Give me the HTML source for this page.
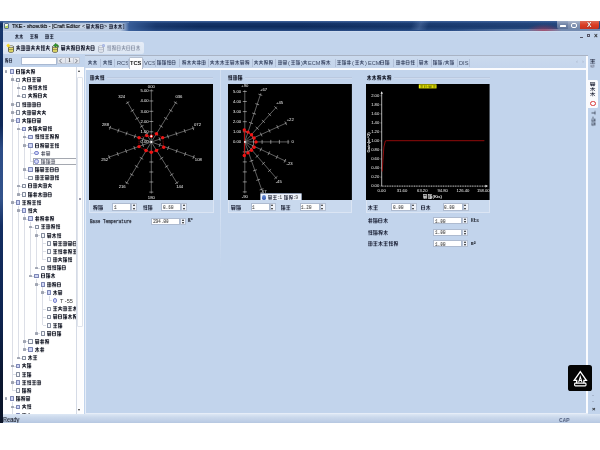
<!DOCTYPE html>
<html><head><meta charset="utf-8"><title>TKE</title>
<style>
html,body{margin:0;padding:0;background:#fff;}
body{width:600px;height:450px;position:relative;overflow:hidden;font-family:"Liberation Sans",sans-serif;}
.a{position:absolute;}
.cj{position:absolute;display:block;border-radius:1px;}
.t{position:absolute;white-space:nowrap;will-change:transform;}
.inp{position:absolute;background:#fff;border:0.6px solid #aebbd0;box-sizing:border-box;}
.spin{position:absolute;background:#edf1f8;border:0.5px solid #b4c0d4;box-sizing:border-box;}
svg{position:absolute;overflow:visible;will-change:transform;}
.cjs{stroke-linecap:square}
</style></head><body>

<svg width="0" height="0" style="position:absolute"><defs><symbol id="g0" viewBox="0 0 10 10" preserveAspectRatio="none"><path d="M1 1.5H9V9H1Z M1 5.2H9 M5 1.5V9" fill="none" stroke="currentColor"/></symbol><symbol id="g1" viewBox="0 0 10 10" preserveAspectRatio="none"><path d="M1 1.5H9 M2 5H8 M1 9H9 M5 1.5V9" fill="none" stroke="currentColor"/></symbol><symbol id="g2" viewBox="0 0 10 10" preserveAspectRatio="none"><path d="M1 3.2H9 M5 .8V9.4 M5 3.4L1 8.6 M5 3.4L9 8.6" fill="none" stroke="currentColor"/></symbol><symbol id="g3" viewBox="0 0 10 10" preserveAspectRatio="none"><path d="M2 1.2H8V9H2Z M2 5H8 M0.6 3V7" fill="none" stroke="currentColor"/></symbol><symbol id="g4" viewBox="0 0 10 10" preserveAspectRatio="none"><path d="M.8 3.2H9.2 M.8 6.8H9.2 M3.4 .8V9.4 M6.8 .8V9.4" fill="none" stroke="currentColor"/></symbol><symbol id="g5" viewBox="0 0 10 10" preserveAspectRatio="none"><path d="M1 3H9 M5 .8C5 5 3 8 .8 9.4 M5 4C6 7 7.5 8.5 9.4 9.2 M2 6H8" fill="none" stroke="currentColor"/></symbol><symbol id="g6" viewBox="0 0 10 10" preserveAspectRatio="none"><path d="M2.4 .8V9.4 M.6 3.4H4.2 M5.4 1.6H9.4 M5.4 5H9.4 M5.4 8.6H9.4 M7.4 1.6V8.6" fill="none" stroke="currentColor"/></symbol><symbol id="g7" viewBox="0 0 10 10" preserveAspectRatio="none"><path d="M1 1.2H9 M1 1.2V9.2 M3 3.6H9V9.2H3 M3 6.4H9 M6 3.6V9.2" fill="none" stroke="currentColor"/></symbol><symbol id="g8" viewBox="0 0 10 10" preserveAspectRatio="none"><path d="M.8 2.2H4 M2.4 .8V9.4 M.6 6.5L4 4.8 M5.4 1.2H9.2V5H5.4Z M5 7H9.6 M7.3 5V9.4" fill="none" stroke="currentColor"/></symbol><symbol id="g9" viewBox="0 0 10 10" preserveAspectRatio="none"><path d="M1 1H9V4H1Z M.6 5.6H9.4 M3 5.6V9.4 M7 5.6V9.4 M1.6 7.6H8.4" fill="none" stroke="currentColor"/></symbol></defs></svg>
<div class="a" style="left:0;top:21px;width:600px;height:401px;background:#c2d4ec"></div>
<div class="a" style="left:0;top:21px;width:600px;height:9.6px;background:linear-gradient(180deg,#3a5c96 0%,#143468 22%,#0e2b5c 55%,#17386c 80%,#2a4d86 100%)"></div>
<div class="a" style="left:300px;top:21px;width:300px;height:9.6px;background:linear-gradient(90deg,rgba(60,100,160,0),rgba(60,100,160,.28) 60%,rgba(70,110,170,.4))"></div>
<div class="a" style="left:2.8px;top:30.6px;width:597px;height:1.2px;background:linear-gradient(180deg,#d8e3f3,rgba(216,227,243,0))"></div>
<div class="a" style="left:450px;top:28.9px;width:150px;height:1.8px;background:linear-gradient(90deg,rgba(122,144,180,0),rgba(122,144,180,.9) 70%)"></div>
<div class="a" style="left:120px;top:21px;width:80px;height:9.6px;background:linear-gradient(90deg,rgba(70,108,168,.95) 0,rgba(60,98,158,.75) 18%,rgba(45,80,140,.3) 45%,rgba(45,80,140,0) 100%)"></div>
<div class="a" style="left:2.8px;top:22.4px;width:126px;height:8.2px;background:linear-gradient(90deg,rgba(186,202,224,1) 0,rgba(184,200,222,1) 93%,rgba(150,172,206,.7) 97%,rgba(120,150,190,0) 100%)"></div>
<div class="a" style="left:2.8px;top:21px;width:126px;height:1.6px;background:linear-gradient(180deg,#4a70a8,#7c9ac4)"></div>
<div class="a" style="left:8px;top:24px;width:112px;height:5px;background:radial-gradient(ellipse at 50% 50%,rgba(225,232,242,.75),rgba(225,232,242,0) 75%)"></div>
<div class="a" style="left:0;top:21px;width:600px;height:2px;background:linear-gradient(180deg,rgba(60,95,150,.9),rgba(60,95,150,0))"></div>
<div class="a" style="left:400px;top:21px;width:40px;height:9px;background:linear-gradient(110deg,rgba(255,255,255,0) 30%,rgba(120,150,200,.35) 50%,rgba(255,255,255,0) 70%)"></div>
<div class="a" style="left:526px;top:23.5px;width:36px;height:7px;background:radial-gradient(ellipse at 50% 100%,rgba(200,50,75,.6),rgba(200,60,80,0) 70%)"></div>
<div class="a" style="left:4.3px;top:23.2px;width:4.4px;height:5.4px;background:linear-gradient(160deg,#f8fae0 40%,#9ccc60 60%,#e8e060);border:0.5px solid #5a7290;box-sizing:border-box;border-radius:1px"></div>
<span class="t" style="left:11.8px;top:22.7px;font:normal 6px/7.2px 'Liberation Sans',sans-serif;color:#05080f;transform:scaleX(.875);transform-origin:0 50%;-webkit-text-stroke:0.2px #05080f">TKE - show.tkb - [Craft Editor</span>
<span class="t" style="left:82.2px;top:23.1px;font:normal 5.4px/6.5px 'Liberation Sans',sans-serif;color:#05080f;">&lt;</span>
<svg class="cjs" style="left:85.6px;top:23.6px;color:rgba(10,15,35,0.91);stroke-width:1.5" width="18.4" height="5.2"><use href="#g9" x="0.00" y="0" width="4.10" height="5.20"/><use href="#g5" x="4.60" y="0" width="4.10" height="5.20"/><use href="#g8" x="9.20" y="0" width="4.10" height="5.20"/><use href="#g3" x="13.80" y="0" width="4.10" height="5.20"/></svg>
<span class="t" style="left:104.2px;top:23.1px;font:normal 5.4px/6.5px 'Liberation Sans',sans-serif;color:#05080f;">&gt;</span>
<svg class="cjs" style="left:109.0px;top:23.6px;color:rgba(10,15,35,0.91);stroke-width:1.5" width="13.5" height="5.2"><use href="#g0" x="0.00" y="0" width="4.00" height="5.20"/><use href="#g2" x="4.50" y="0" width="4.00" height="5.20"/><use href="#g2" x="9.00" y="0" width="4.00" height="5.20"/></svg>
<span class="t" style="left:122.6px;top:23.1px;font:normal 5.4px/6.5px 'Liberation Sans',sans-serif;color:#05080f;">]</span>
<div class="a" style="left:557.4px;top:21.2px;width:11px;height:7.7px;background:linear-gradient(180deg,#9aa9c4,#7083a6 45%,#5a7098);border-radius:0 0 0 2px;box-sizing:border-box"></div>
<div class="a" style="left:568.4px;top:21.2px;width:11.4px;height:7.7px;background:linear-gradient(180deg,#aab6cc,#8796b4 45%,#7084a8);box-sizing:border-box"></div>
<div class="a" style="left:579.8px;top:21.2px;width:19.2px;height:7.7px;background:linear-gradient(180deg,#dc6c58,#dc3c22 50%,#c23220);border-radius:0 0 2px 0;box-sizing:border-box"></div>
<div class="a" style="left:560px;top:25.4px;width:5.6px;height:1.8px;background:#fff;border-radius:.5px"></div>
<div class="a" style="left:571.4px;top:22.5px;width:5.4px;height:5px;border:1.3px solid #fff;box-sizing:border-box;border-radius:2px"></div>
<span class="t" style="left:586.8px;top:21.1px;font:bold 6.6px/7.9px 'Liberation Sans',sans-serif;color:#fff;text-shadow:0 0 1px #501008">X</span>
<div class="a" style="left:0;top:29px;width:2.8px;height:386px;background:linear-gradient(180deg,#17386e 0,#0d2656 20%,#0e2858 25%,#2c4c86 31%,#33538b 44%,#132e62 51%,#0e2450 75%,#0a1730 90%,#0a1428)"></div>
<svg class="cjs" style="left:15.2px;top:34.1px;color:rgba(15,20,40,0.91);stroke-width:1.5" width="8.6" height="5.2"><use href="#g2" x="0.00" y="0" width="3.80" height="5.20"/><use href="#g2" x="4.30" y="0" width="3.80" height="5.20"/></svg>
<svg class="cjs" style="left:30.0px;top:34.1px;color:rgba(15,20,40,0.91);stroke-width:1.5" width="8.6" height="5.2"><use href="#g1" x="0.00" y="0" width="3.80" height="5.20"/><use href="#g8" x="4.30" y="0" width="3.80" height="5.20"/></svg>
<svg class="cjs" style="left:45.2px;top:34.1px;color:rgba(15,20,40,0.91);stroke-width:1.5" width="9.2" height="5.2"><use href="#g0" x="0.00" y="0" width="4.10" height="5.20"/><use href="#g1" x="4.60" y="0" width="4.10" height="5.20"/></svg>
<div class="a" style="left:579.5px;top:37px;width:3px;height:1.2px;background:#556"></div>
<div class="a" style="left:586.5px;top:33.5px;width:3.2px;height:3.5px;border:0.8px solid #556;box-sizing:border-box"></div>
<span class="t" style="left:593.8px;top:32.2px;font:bold 6.4px/7.7px 'Liberation Sans',sans-serif;color:#222;">×</span>
<div class="a" style="left:3.4px;top:42.2px;width:140.6px;height:12.2px;background:linear-gradient(180deg,#e6edf7,#dce6f3);border-radius:1px 2px 2px 1px"></div>
<svg style="left:7.8px;top:44.6px" width="6" height="8" viewBox="0 0 6 8"><path d="M0.5 1.6 V6.6 C0.5 7.6 5.5 7.6 5.5 6.6 V1.6 Z" fill="#ece46a" stroke="#3c3c30" stroke-width="0.7"/><ellipse cx="3" cy="1.7" rx="2.5" ry="1" fill="#fbfbf0" stroke="#3c3c30" stroke-width="0.6"/><path d="M0.6 4.1 C1.2 5 4.8 5 5.4 4.1" fill="none" stroke="#3c3c30" stroke-width="0.55"/></svg>
<div class="a" style="left:6.8px;top:43.6px;width:2.6px;height:2.6px;background:#f8d81c;border-radius:40%;transform:rotate(45deg)"></div>
<svg class="cjs" style="left:15.6px;top:45.2px;color:rgba(12,16,34,0.94);stroke-width:1.55" width="34.4" height="6.0"><use href="#g5" x="0.00" y="0" width="4.42" height="6.00"/><use href="#g0" x="4.92" y="0" width="4.42" height="6.00"/><use href="#g0" x="9.84" y="0" width="4.42" height="6.00"/><use href="#g5" x="14.76" y="0" width="4.42" height="6.00"/><use href="#g5" x="19.68" y="0" width="4.42" height="6.00"/><use href="#g6" x="24.60" y="0" width="4.42" height="6.00"/><use href="#g5" x="29.52" y="0" width="4.42" height="6.00"/></svg>
<svg style="left:52.4px;top:45px" width="6" height="8" viewBox="0 0 6 8"><path d="M0.5 1.6 V6.6 C0.5 7.6 5.5 7.6 5.5 6.6 V1.6 Z" fill="#ece46a" stroke="#3c3c30" stroke-width="0.7"/><ellipse cx="3" cy="1.7" rx="2.5" ry="1" fill="#fbfbf0" stroke="#3c3c30" stroke-width="0.6"/><path d="M0.6 4.1 C1.2 5 4.8 5 5.4 4.1" fill="none" stroke="#3c3c30" stroke-width="0.55"/></svg>
<svg style="left:53.4px;top:43px" width="6" height="4.6" viewBox="0 0 6 4.6"><path d="M0.4 2.4 L3 0.2 L3 1.3 C5 1.3 5.8 2.6 5.6 4.4 C5 3.2 4.2 3 3 3 L3 4.4 Z" fill="#2f9a2c" stroke="#1c5a1a" stroke-width="0.4"/></svg>
<svg class="cjs" style="left:61.2px;top:45.2px;color:rgba(12,16,34,0.94);stroke-width:1.55" width="34.4" height="6.0"><use href="#g9" x="0.00" y="0" width="4.42" height="6.00"/><use href="#g5" x="4.92" y="0" width="4.42" height="6.00"/><use href="#g8" x="9.84" y="0" width="4.42" height="6.00"/><use href="#g3" x="14.76" y="0" width="4.42" height="6.00"/><use href="#g8" x="19.68" y="0" width="4.42" height="6.00"/><use href="#g5" x="24.60" y="0" width="4.42" height="6.00"/><use href="#g3" x="29.52" y="0" width="4.42" height="6.00"/></svg>
<svg style="left:98.4px;top:45px" width="6" height="8" viewBox="0 0 6 8"><path d="M0.5 1.6 V6.6 C0.5 7.6 5.5 7.6 5.5 6.6 V1.6 Z" fill="#e4e8f0" stroke="#9aa2b2" stroke-width="0.7"/><ellipse cx="3" cy="1.7" rx="2.5" ry="1" fill="#f8f9fc" stroke="#9aa2b2" stroke-width="0.6"/><path d="M0.6 4.1 C1.2 5 4.8 5 5.4 4.1" fill="none" stroke="#9aa2b2" stroke-width="0.55"/></svg>
<div class="a" style="left:101.5px;top:43.6px;width:3.6px;height:3.6px;background:radial-gradient(circle,#b8c4ec,#8a9cd4);border-radius:50%"></div>
<svg class="cjs" style="left:107.0px;top:45.2px;color:rgba(120,130,150,0.78);stroke-width:1.3" width="33.7" height="6.0"><use href="#g6" x="0.00" y="0" width="4.32" height="6.00"/><use href="#g8" x="4.82" y="0" width="4.32" height="6.00"/><use href="#g3" x="9.64" y="0" width="4.32" height="6.00"/><use href="#g5" x="14.46" y="0" width="4.32" height="6.00"/><use href="#g3" x="19.28" y="0" width="4.32" height="6.00"/><use href="#g3" x="24.10" y="0" width="4.32" height="6.00"/><use href="#g2" x="28.92" y="0" width="4.32" height="6.00"/></svg>
<svg class="cjs" style="left:4.5px;top:58.2px;color:rgba(15,20,40,0.85);stroke-width:1.5" width="7.8" height="5.2"><use href="#g8" x="0.00" y="0" width="3.40" height="5.20"/><use href="#g3" x="3.90" y="0" width="3.40" height="5.20"/></svg>
<div class="inp" style="left:21px;top:57px;width:35.5px;height:7.6px;border-color:#a9b9d2"></div>
<div class="a" style="left:57.4px;top:56.6px;width:22.8px;height:7.8px;background:linear-gradient(180deg,#eceef3,#dde1e9);border:0.5px solid #c0c8d6;box-sizing:border-box;border-radius:1px"></div>
<div class="a" style="left:64.8px;top:57px;width:0.6px;height:7px;background:#c4cad6"></div>
<div class="a" style="left:72.6px;top:57px;width:0.6px;height:7px;background:#c4cad6"></div>
<svg style="left:57.4px;top:56.6px" width="22.8" height="7.8" viewBox="0 0 22.8 7.8"><path d="M4.6 1.8 L2.6 3.9 L4.6 6 M18.4 1.8 L20.4 3.9 L18.4 6" fill="none" stroke="#6a6e78" stroke-width="0.9"/></svg>
<span class="t" style="left:67.8px;top:57.2px;font:bold 5.8px/7.0px 'Liberation Serif',serif;color:#555;">1</span>
<div class="a" style="left:3px;top:66.5px;width:80.5px;height:347.5px;background:#fff;overflow:hidden" id="tree">
<div class="a" style="left:8.9px;top:8.1px;width:0.6px;height:5.2px;background:#dcdfe7"></div>
<div class="a" style="left:9.2px;top:13.0px;width:3.4px;height:0.6px;background:#dcdfe7"></div>
<div class="a" style="left:15.0px;top:16.3px;width:0.6px;height:5.2px;background:#dcdfe7"></div>
<div class="a" style="left:15.3px;top:21.2px;width:3.4px;height:0.6px;background:#dcdfe7"></div>
<div class="a" style="left:15.0px;top:16.3px;width:0.6px;height:13.4px;background:#dcdfe7"></div>
<div class="a" style="left:15.3px;top:29.3px;width:3.4px;height:0.6px;background:#dcdfe7"></div>
<div class="a" style="left:8.9px;top:8.1px;width:0.6px;height:29.7px;background:#dcdfe7"></div>
<div class="a" style="left:9.2px;top:37.5px;width:3.4px;height:0.6px;background:#dcdfe7"></div>
<div class="a" style="left:8.9px;top:8.1px;width:0.6px;height:37.9px;background:#dcdfe7"></div>
<div class="a" style="left:9.2px;top:45.7px;width:3.4px;height:0.6px;background:#dcdfe7"></div>
<div class="a" style="left:8.9px;top:8.1px;width:0.6px;height:46.1px;background:#dcdfe7"></div>
<div class="a" style="left:9.2px;top:53.9px;width:3.4px;height:0.6px;background:#dcdfe7"></div>
<div class="a" style="left:15.0px;top:57.2px;width:0.6px;height:5.2px;background:#dcdfe7"></div>
<div class="a" style="left:15.3px;top:62.1px;width:3.4px;height:0.6px;background:#dcdfe7"></div>
<div class="a" style="left:21.1px;top:65.4px;width:0.6px;height:5.2px;background:#dcdfe7"></div>
<div class="a" style="left:21.4px;top:70.2px;width:3.4px;height:0.6px;background:#dcdfe7"></div>
<div class="a" style="left:21.1px;top:65.4px;width:0.6px;height:13.4px;background:#dcdfe7"></div>
<div class="a" style="left:21.4px;top:78.4px;width:3.4px;height:0.6px;background:#dcdfe7"></div>
<div class="a" style="left:27.2px;top:81.7px;width:0.6px;height:5.2px;background:#dcdfe7"></div>
<div class="a" style="left:27.5px;top:86.6px;width:3.4px;height:0.6px;background:#dcdfe7"></div>
<div class="a" style="left:27.2px;top:81.7px;width:0.6px;height:13.4px;background:#dcdfe7"></div>
<div class="a" style="left:27.5px;top:94.8px;width:3.4px;height:0.6px;background:#dcdfe7"></div>
<div class="a" style="left:21.1px;top:65.4px;width:0.6px;height:37.9px;background:#dcdfe7"></div>
<div class="a" style="left:21.4px;top:103.0px;width:3.4px;height:0.6px;background:#dcdfe7"></div>
<div class="a" style="left:21.1px;top:65.4px;width:0.6px;height:46.1px;background:#dcdfe7"></div>
<div class="a" style="left:21.4px;top:111.1px;width:3.4px;height:0.6px;background:#dcdfe7"></div>
<div class="a" style="left:15.0px;top:57.2px;width:0.6px;height:62.4px;background:#dcdfe7"></div>
<div class="a" style="left:15.3px;top:119.3px;width:3.4px;height:0.6px;background:#dcdfe7"></div>
<div class="a" style="left:15.0px;top:57.2px;width:0.6px;height:70.6px;background:#dcdfe7"></div>
<div class="a" style="left:15.3px;top:127.5px;width:3.4px;height:0.6px;background:#dcdfe7"></div>
<div class="a" style="left:8.9px;top:8.1px;width:0.6px;height:127.9px;background:#dcdfe7"></div>
<div class="a" style="left:9.2px;top:135.7px;width:3.4px;height:0.6px;background:#dcdfe7"></div>
<div class="a" style="left:15.0px;top:139.0px;width:0.6px;height:5.2px;background:#dcdfe7"></div>
<div class="a" style="left:15.3px;top:143.9px;width:3.4px;height:0.6px;background:#dcdfe7"></div>
<div class="a" style="left:21.1px;top:147.2px;width:0.6px;height:5.2px;background:#dcdfe7"></div>
<div class="a" style="left:21.4px;top:152.0px;width:3.4px;height:0.6px;background:#dcdfe7"></div>
<div class="a" style="left:27.2px;top:155.3px;width:0.6px;height:5.2px;background:#dcdfe7"></div>
<div class="a" style="left:27.5px;top:160.2px;width:3.4px;height:0.6px;background:#dcdfe7"></div>
<div class="a" style="left:33.3px;top:163.5px;width:0.6px;height:5.2px;background:#dcdfe7"></div>
<div class="a" style="left:33.6px;top:168.4px;width:3.4px;height:0.6px;background:#dcdfe7"></div>
<div class="a" style="left:39.4px;top:171.7px;width:0.6px;height:5.2px;background:#dcdfe7"></div>
<div class="a" style="left:39.7px;top:176.6px;width:3.4px;height:0.6px;background:#dcdfe7"></div>
<div class="a" style="left:39.4px;top:171.7px;width:0.6px;height:13.4px;background:#dcdfe7"></div>
<div class="a" style="left:39.7px;top:184.8px;width:3.4px;height:0.6px;background:#dcdfe7"></div>
<div class="a" style="left:39.4px;top:171.7px;width:0.6px;height:21.5px;background:#dcdfe7"></div>
<div class="a" style="left:39.7px;top:192.9px;width:3.4px;height:0.6px;background:#dcdfe7"></div>
<div class="a" style="left:33.3px;top:163.5px;width:0.6px;height:37.9px;background:#dcdfe7"></div>
<div class="a" style="left:33.6px;top:201.1px;width:3.4px;height:0.6px;background:#dcdfe7"></div>
<div class="a" style="left:27.2px;top:155.3px;width:0.6px;height:54.3px;background:#dcdfe7"></div>
<div class="a" style="left:27.5px;top:209.3px;width:3.4px;height:0.6px;background:#dcdfe7"></div>
<div class="a" style="left:33.3px;top:212.6px;width:0.6px;height:5.2px;background:#dcdfe7"></div>
<div class="a" style="left:33.6px;top:217.5px;width:3.4px;height:0.6px;background:#dcdfe7"></div>
<div class="a" style="left:39.4px;top:220.8px;width:0.6px;height:5.2px;background:#dcdfe7"></div>
<div class="a" style="left:39.7px;top:225.7px;width:3.4px;height:0.6px;background:#dcdfe7"></div>
<div class="a" style="left:45.5px;top:229.0px;width:0.6px;height:5.2px;background:#dcdfe7"></div>
<div class="a" style="left:45.8px;top:233.8px;width:3.4px;height:0.6px;background:#dcdfe7"></div>
<div class="a" style="left:39.4px;top:220.8px;width:0.6px;height:21.5px;background:#dcdfe7"></div>
<div class="a" style="left:39.7px;top:242.0px;width:3.4px;height:0.6px;background:#dcdfe7"></div>
<div class="a" style="left:39.4px;top:220.8px;width:0.6px;height:29.7px;background:#dcdfe7"></div>
<div class="a" style="left:39.7px;top:250.2px;width:3.4px;height:0.6px;background:#dcdfe7"></div>
<div class="a" style="left:39.4px;top:220.8px;width:0.6px;height:37.9px;background:#dcdfe7"></div>
<div class="a" style="left:39.7px;top:258.4px;width:3.4px;height:0.6px;background:#dcdfe7"></div>
<div class="a" style="left:33.3px;top:212.6px;width:0.6px;height:54.3px;background:#dcdfe7"></div>
<div class="a" style="left:33.6px;top:266.6px;width:3.4px;height:0.6px;background:#dcdfe7"></div>
<div class="a" style="left:21.1px;top:147.2px;width:0.6px;height:127.9px;background:#dcdfe7"></div>
<div class="a" style="left:21.4px;top:274.7px;width:3.4px;height:0.6px;background:#dcdfe7"></div>
<div class="a" style="left:21.1px;top:147.2px;width:0.6px;height:136.1px;background:#dcdfe7"></div>
<div class="a" style="left:21.4px;top:282.9px;width:3.4px;height:0.6px;background:#dcdfe7"></div>
<div class="a" style="left:15.0px;top:139.0px;width:0.6px;height:152.4px;background:#dcdfe7"></div>
<div class="a" style="left:15.3px;top:291.1px;width:3.4px;height:0.6px;background:#dcdfe7"></div>
<div class="a" style="left:8.9px;top:8.1px;width:0.6px;height:291.5px;background:#dcdfe7"></div>
<div class="a" style="left:9.2px;top:299.3px;width:3.4px;height:0.6px;background:#dcdfe7"></div>
<div class="a" style="left:8.9px;top:8.1px;width:0.6px;height:299.7px;background:#dcdfe7"></div>
<div class="a" style="left:9.2px;top:307.5px;width:3.4px;height:0.6px;background:#dcdfe7"></div>
<div class="a" style="left:8.9px;top:8.1px;width:0.6px;height:307.8px;background:#dcdfe7"></div>
<div class="a" style="left:9.2px;top:315.6px;width:3.4px;height:0.6px;background:#dcdfe7"></div>
<div class="a" style="left:8.9px;top:8.1px;width:0.6px;height:316.0px;background:#dcdfe7"></div>
<div class="a" style="left:9.2px;top:323.8px;width:3.4px;height:0.6px;background:#dcdfe7"></div>
<div class="a" style="left:8.9px;top:335.3px;width:0.6px;height:5.2px;background:#dcdfe7"></div>
<div class="a" style="left:9.2px;top:340.2px;width:3.4px;height:0.6px;background:#dcdfe7"></div>
<div class="a" style="left:8.9px;top:335.3px;width:0.6px;height:13.4px;background:#dcdfe7"></div>
<div class="a" style="left:9.2px;top:348.4px;width:3.4px;height:0.6px;background:#dcdfe7"></div>
<div class="a" style="left:1.7px;top:3.7px;width:2.8px;height:2.8px;background:#a0a5b2;border-radius:.6px"></div>
<div class="a" style="left:6.8px;top:2.7px;width:4.4px;height:4.8px;border:0.8px solid #7c86b4;box-sizing:border-box;background:#d0d6f6;border-radius:.6px"></div>
<svg class="cjs" style="left:12.6px;top:2.4px;color:rgba(10,14,28,0.91);stroke-width:1.7" width="19.6" height="5.4"><use href="#g3" x="0.00" y="0" width="4.45" height="5.40"/><use href="#g7" x="4.90" y="0" width="4.45" height="5.40"/><use href="#g5" x="9.80" y="0" width="4.45" height="5.40"/><use href="#g8" x="14.70" y="0" width="4.45" height="5.40"/></svg>
<div class="a" style="left:7.8px;top:11.9px;width:2.8px;height:2.8px;background:#a0a5b2;border-radius:.6px"></div>
<div class="a" style="left:13.0px;top:11.0px;width:4.3px;height:4.7px;border:0.8px solid #858d9e;box-sizing:border-box;background:#f6f8fb;border-radius:.6px"></div>
<svg class="cjs" style="left:18.9px;top:10.6px;color:rgba(10,14,28,0.91);stroke-width:1.7" width="19.6" height="5.4"><use href="#g5" x="0.00" y="0" width="4.45" height="5.40"/><use href="#g3" x="4.90" y="0" width="4.45" height="5.40"/><use href="#g1" x="9.80" y="0" width="4.45" height="5.40"/><use href="#g9" x="14.70" y="0" width="4.45" height="5.40"/></svg>
<div class="a" style="left:13.9px;top:20.1px;width:2.8px;height:2.8px;background:#a0a5b2;border-radius:.6px"></div>
<div class="a" style="left:19.2px;top:19.2px;width:4.3px;height:4.7px;border:0.8px solid #858d9e;box-sizing:border-box;background:#f6f8fb;border-radius:.6px"></div>
<svg class="cjs" style="left:25.2px;top:18.8px;color:rgba(10,14,28,0.91);stroke-width:1.7" width="19.6" height="5.4"><use href="#g8" x="0.00" y="0" width="4.45" height="5.40"/><use href="#g6" x="4.90" y="0" width="4.45" height="5.40"/><use href="#g2" x="9.80" y="0" width="4.45" height="5.40"/><use href="#g6" x="14.70" y="0" width="4.45" height="5.40"/></svg>
<div class="a" style="left:13.9px;top:28.2px;width:2.8px;height:2.8px;background:#a0a5b2;border-radius:.6px"></div>
<div class="a" style="left:19.2px;top:27.3px;width:4.3px;height:4.7px;border:0.8px solid #858d9e;box-sizing:border-box;background:#f6f8fb;border-radius:.6px"></div>
<svg class="cjs" style="left:25.2px;top:26.9px;color:rgba(10,14,28,0.91);stroke-width:1.7" width="19.6" height="5.4"><use href="#g5" x="0.00" y="0" width="4.45" height="5.40"/><use href="#g8" x="4.90" y="0" width="4.45" height="5.40"/><use href="#g3" x="9.80" y="0" width="4.45" height="5.40"/><use href="#g5" x="14.70" y="0" width="4.45" height="5.40"/></svg>
<div class="a" style="left:7.8px;top:36.4px;width:2.8px;height:2.8px;background:#a0a5b2;border-radius:.6px"></div>
<div class="a" style="left:13.0px;top:35.5px;width:4.3px;height:4.7px;border:0.8px solid #858d9e;box-sizing:border-box;background:#f6f8fb;border-radius:.6px"></div>
<svg class="cjs" style="left:18.9px;top:35.1px;color:rgba(10,14,28,0.91);stroke-width:1.7" width="19.6" height="5.4"><use href="#g6" x="0.00" y="0" width="4.45" height="5.40"/><use href="#g0" x="4.90" y="0" width="4.45" height="5.40"/><use href="#g0" x="9.80" y="0" width="4.45" height="5.40"/><use href="#g3" x="14.70" y="0" width="4.45" height="5.40"/></svg>
<div class="a" style="left:7.8px;top:44.6px;width:2.8px;height:2.8px;background:#a0a5b2;border-radius:.6px"></div>
<div class="a" style="left:13.0px;top:43.7px;width:4.3px;height:4.7px;border:0.8px solid #858d9e;box-sizing:border-box;background:#f6f8fb;border-radius:.6px"></div>
<svg class="cjs" style="left:18.9px;top:43.3px;color:rgba(10,14,28,0.91);stroke-width:1.7" width="24.5" height="5.4"><use href="#g5" x="0.00" y="0" width="4.45" height="5.40"/><use href="#g0" x="4.90" y="0" width="4.45" height="5.40"/><use href="#g9" x="9.80" y="0" width="4.45" height="5.40"/><use href="#g5" x="14.70" y="0" width="4.45" height="5.40"/><use href="#g5" x="19.60" y="0" width="4.45" height="5.40"/></svg>
<div class="a" style="left:7.8px;top:52.8px;width:2.8px;height:2.8px;background:#a0a5b2;border-radius:.6px"></div>
<div class="a" style="left:12.9px;top:51.8px;width:4.4px;height:4.8px;border:0.8px solid #7c86b4;box-sizing:border-box;background:#d0d6f6;border-radius:.6px"></div>
<svg class="cjs" style="left:18.9px;top:51.5px;color:rgba(10,14,28,0.91);stroke-width:1.7" width="19.6" height="5.4"><use href="#g5" x="0.00" y="0" width="4.45" height="5.40"/><use href="#g7" x="4.90" y="0" width="4.45" height="5.40"/><use href="#g3" x="9.80" y="0" width="4.45" height="5.40"/><use href="#g9" x="14.70" y="0" width="4.45" height="5.40"/></svg>
<div class="a" style="left:13.9px;top:61.0px;width:2.8px;height:2.8px;background:#a0a5b2;border-radius:.6px"></div>
<div class="a" style="left:19.1px;top:60.0px;width:4.4px;height:4.8px;border:0.8px solid #7c86b4;box-sizing:border-box;background:#d0d6f6;border-radius:.6px"></div>
<svg class="cjs" style="left:25.2px;top:59.7px;color:rgba(10,14,28,0.91);stroke-width:1.7" width="24.5" height="5.4"><use href="#g5" x="0.00" y="0" width="4.45" height="5.40"/><use href="#g7" x="4.90" y="0" width="4.45" height="5.40"/><use href="#g5" x="9.80" y="0" width="4.45" height="5.40"/><use href="#g9" x="14.70" y="0" width="4.45" height="5.40"/><use href="#g6" x="19.60" y="0" width="4.45" height="5.40"/></svg>
<div class="a" style="left:20.0px;top:69.1px;width:2.8px;height:2.8px;background:#a0a5b2;border-radius:.6px"></div>
<div class="a" style="left:25.3px;top:68.1px;width:4.4px;height:4.8px;border:0.8px solid #7c86b4;box-sizing:border-box;background:#d0d6f6;border-radius:.6px"></div>
<svg class="cjs" style="left:31.5px;top:67.8px;color:rgba(10,14,28,0.91);stroke-width:1.7" width="24.5" height="5.4"><use href="#g6" x="0.00" y="0" width="4.45" height="5.40"/><use href="#g6" x="4.90" y="0" width="4.45" height="5.40"/><use href="#g1" x="9.80" y="0" width="4.45" height="5.40"/><use href="#g8" x="14.70" y="0" width="4.45" height="5.40"/><use href="#g8" x="19.60" y="0" width="4.45" height="5.40"/></svg>
<div class="a" style="left:20.0px;top:77.3px;width:2.8px;height:2.8px;background:#a0a5b2;border-radius:.6px"></div>
<div class="a" style="left:25.3px;top:76.3px;width:4.4px;height:4.8px;border:0.8px solid #7c86b4;box-sizing:border-box;background:#d0d6f6;border-radius:.6px"></div>
<svg class="cjs" style="left:31.5px;top:76.0px;color:rgba(10,14,28,0.91);stroke-width:1.7" width="24.5" height="5.4"><use href="#g3" x="0.00" y="0" width="4.45" height="5.40"/><use href="#g8" x="4.90" y="0" width="4.45" height="5.40"/><use href="#g9" x="9.80" y="0" width="4.45" height="5.40"/><use href="#g1" x="14.70" y="0" width="4.45" height="5.40"/><use href="#g6" x="19.60" y="0" width="4.45" height="5.40"/></svg>
<div class="a" style="left:31.3px;top:84.6px;width:4.4px;height:4.4px;border:0.9px solid #7a84cc;box-sizing:border-box;background:#d4d8f6;border-radius:50%"></div>
<svg class="cjs" style="left:37.8px;top:84.3px;color:rgba(35,40,58,0.81);stroke-width:1.3" width="9.8" height="5.2"><use href="#g4" x="0.00" y="0" width="4.40" height="5.20"/><use href="#g9" x="4.90" y="0" width="4.40" height="5.20"/></svg>
<div class="a" style="left:31.3px;top:92.8px;width:4.4px;height:4.4px;border:0.9px solid #7a84cc;box-sizing:border-box;background:#d4d8f6;border-radius:50%"></div>
<div class="a" style="left:30.3px;top:91.2px;width:44px;height:7.8px;border:0.6px solid #a4a8b0;box-sizing:border-box;background:#fdfdfd"></div>
<div class="a" style="left:31.3px;top:92.8px;width:4.4px;height:4.4px;border:0.9px solid #7a84cc;box-sizing:border-box;background:#d4d8f6;border-radius:50%"></div>
<svg class="cjs" style="left:37.8px;top:92.5px;color:rgba(45,50,68,0.78);stroke-width:1.3" width="14.7" height="5.2"><use href="#g7" x="0.00" y="0" width="4.40" height="5.20"/><use href="#g7" x="4.90" y="0" width="4.40" height="5.20"/><use href="#g0" x="9.80" y="0" width="4.40" height="5.20"/></svg>
<div class="a" style="left:20.0px;top:101.9px;width:2.8px;height:2.8px;background:#a0a5b2;border-radius:.6px"></div>
<div class="a" style="left:25.3px;top:100.9px;width:4.4px;height:4.8px;border:0.8px solid #7c86b4;box-sizing:border-box;background:#d0d6f6;border-radius:.6px"></div>
<svg class="cjs" style="left:31.5px;top:100.6px;color:rgba(10,14,28,0.91);stroke-width:1.7" width="24.5" height="5.4"><use href="#g7" x="0.00" y="0" width="4.45" height="5.40"/><use href="#g9" x="4.90" y="0" width="4.45" height="5.40"/><use href="#g1" x="9.80" y="0" width="4.45" height="5.40"/><use href="#g3" x="14.70" y="0" width="4.45" height="5.40"/><use href="#g3" x="19.60" y="0" width="4.45" height="5.40"/></svg>
<div class="a" style="left:25.4px;top:109.1px;width:4.3px;height:4.7px;border:0.8px solid #858d9e;box-sizing:border-box;background:#f6f8fb;border-radius:.6px"></div>
<svg class="cjs" style="left:31.5px;top:108.7px;color:rgba(10,14,28,0.91);stroke-width:1.7" width="24.5" height="5.4"><use href="#g0" x="0.00" y="0" width="4.45" height="5.40"/><use href="#g1" x="4.90" y="0" width="4.45" height="5.40"/><use href="#g9" x="9.80" y="0" width="4.45" height="5.40"/><use href="#g0" x="14.70" y="0" width="4.45" height="5.40"/><use href="#g6" x="19.60" y="0" width="4.45" height="5.40"/></svg>
<div class="a" style="left:13.9px;top:118.2px;width:2.8px;height:2.8px;background:#a0a5b2;border-radius:.6px"></div>
<div class="a" style="left:19.2px;top:117.3px;width:4.3px;height:4.7px;border:0.8px solid #858d9e;box-sizing:border-box;background:#f6f8fb;border-radius:.6px"></div>
<svg class="cjs" style="left:25.2px;top:116.9px;color:rgba(10,14,28,0.91);stroke-width:1.7" width="24.5" height="5.4"><use href="#g3" x="0.00" y="0" width="4.45" height="5.40"/><use href="#g0" x="4.90" y="0" width="4.45" height="5.40"/><use href="#g5" x="9.80" y="0" width="4.45" height="5.40"/><use href="#g0" x="14.70" y="0" width="4.45" height="5.40"/><use href="#g5" x="19.60" y="0" width="4.45" height="5.40"/></svg>
<div class="a" style="left:13.9px;top:126.4px;width:2.8px;height:2.8px;background:#a0a5b2;border-radius:.6px"></div>
<div class="a" style="left:19.2px;top:125.5px;width:4.3px;height:4.7px;border:0.8px solid #858d9e;box-sizing:border-box;background:#f6f8fb;border-radius:.6px"></div>
<svg class="cjs" style="left:25.2px;top:125.1px;color:rgba(10,14,28,0.91);stroke-width:1.7" width="24.5" height="5.4"><use href="#g7" x="0.00" y="0" width="4.45" height="5.40"/><use href="#g4" x="4.90" y="0" width="4.45" height="5.40"/><use href="#g2" x="9.80" y="0" width="4.45" height="5.40"/><use href="#g0" x="14.70" y="0" width="4.45" height="5.40"/><use href="#g3" x="19.60" y="0" width="4.45" height="5.40"/></svg>
<div class="a" style="left:7.8px;top:134.6px;width:2.8px;height:2.8px;background:#a0a5b2;border-radius:.6px"></div>
<div class="a" style="left:12.9px;top:133.6px;width:4.4px;height:4.8px;border:0.8px solid #7c86b4;box-sizing:border-box;background:#d0d6f6;border-radius:.6px"></div>
<svg class="cjs" style="left:18.9px;top:133.3px;color:rgba(10,14,28,0.91);stroke-width:1.7" width="19.6" height="5.4"><use href="#g1" x="0.00" y="0" width="4.45" height="5.40"/><use href="#g8" x="4.90" y="0" width="4.45" height="5.40"/><use href="#g1" x="9.80" y="0" width="4.45" height="5.40"/><use href="#g6" x="14.70" y="0" width="4.45" height="5.40"/></svg>
<div class="a" style="left:13.9px;top:142.8px;width:2.8px;height:2.8px;background:#a0a5b2;border-radius:.6px"></div>
<div class="a" style="left:19.1px;top:141.8px;width:4.4px;height:4.8px;border:0.8px solid #7c86b4;box-sizing:border-box;background:#d0d6f6;border-radius:.6px"></div>
<svg class="cjs" style="left:25.2px;top:141.5px;color:rgba(10,14,28,0.91);stroke-width:1.7" width="9.8" height="5.4"><use href="#g6" x="0.00" y="0" width="4.45" height="5.40"/><use href="#g5" x="4.90" y="0" width="4.45" height="5.40"/></svg>
<div class="a" style="left:20.0px;top:150.9px;width:2.8px;height:2.8px;background:#a0a5b2;border-radius:.6px"></div>
<div class="a" style="left:25.3px;top:149.9px;width:4.4px;height:4.8px;border:0.8px solid #7c86b4;box-sizing:border-box;background:#d0d6f6;border-radius:.6px"></div>
<svg class="cjs" style="left:31.5px;top:149.6px;color:rgba(10,14,28,0.91);stroke-width:1.7" width="19.6" height="5.4"><use href="#g4" x="0.00" y="0" width="4.45" height="5.40"/><use href="#g8" x="4.90" y="0" width="4.45" height="5.40"/><use href="#g4" x="9.80" y="0" width="4.45" height="5.40"/><use href="#g8" x="14.70" y="0" width="4.45" height="5.40"/></svg>
<div class="a" style="left:26.1px;top:159.1px;width:2.8px;height:2.8px;background:#a0a5b2;border-radius:.6px"></div>
<div class="a" style="left:31.5px;top:158.2px;width:4.3px;height:4.7px;border:0.8px solid #858d9e;box-sizing:border-box;background:#f6f8fb;border-radius:.6px"></div>
<svg class="cjs" style="left:37.8px;top:157.8px;color:rgba(10,14,28,0.91);stroke-width:1.7" width="19.6" height="5.4"><use href="#g1" x="0.00" y="0" width="4.45" height="5.40"/><use href="#g0" x="4.90" y="0" width="4.45" height="5.40"/><use href="#g8" x="9.80" y="0" width="4.45" height="5.40"/><use href="#g6" x="14.70" y="0" width="4.45" height="5.40"/></svg>
<div class="a" style="left:32.2px;top:167.3px;width:2.8px;height:2.8px;background:#a0a5b2;border-radius:.6px"></div>
<div class="a" style="left:37.6px;top:166.4px;width:4.3px;height:4.7px;border:0.8px solid #858d9e;box-sizing:border-box;background:#f6f8fb;border-radius:.6px"></div>
<svg class="cjs" style="left:44.1px;top:166.0px;color:rgba(10,14,28,0.91);stroke-width:1.7" width="14.7" height="5.4"><use href="#g9" x="0.00" y="0" width="4.45" height="5.40"/><use href="#g2" x="4.90" y="0" width="4.45" height="5.40"/><use href="#g6" x="9.80" y="0" width="4.45" height="5.40"/></svg>
<div class="a" style="left:43.8px;top:174.6px;width:4.3px;height:4.7px;border:0.8px solid #858d9e;box-sizing:border-box;background:#f6f8fb;border-radius:.6px"></div>
<svg class="cjs" style="left:50.4px;top:174.2px;color:rgba(10,14,28,0.91);stroke-width:1.7" width="24.5" height="5.4"><use href="#g9" x="0.00" y="0" width="4.45" height="5.40"/><use href="#g1" x="4.90" y="0" width="4.45" height="5.40"/><use href="#g0" x="9.80" y="0" width="4.45" height="5.40"/><use href="#g9" x="14.70" y="0" width="4.45" height="5.40"/><use href="#g3" x="19.60" y="0" width="4.45" height="5.40"/></svg>
<div class="a" style="left:43.8px;top:182.8px;width:4.3px;height:4.7px;border:0.8px solid #858d9e;box-sizing:border-box;background:#f6f8fb;border-radius:.6px"></div>
<svg class="cjs" style="left:50.4px;top:182.4px;color:rgba(10,14,28,0.91);stroke-width:1.7" width="24.5" height="5.4"><use href="#g1" x="0.00" y="0" width="4.45" height="5.40"/><use href="#g6" x="4.90" y="0" width="4.45" height="5.40"/><use href="#g4" x="9.80" y="0" width="4.45" height="5.40"/><use href="#g8" x="14.70" y="0" width="4.45" height="5.40"/><use href="#g1" x="19.60" y="0" width="4.45" height="5.40"/></svg>
<div class="a" style="left:43.8px;top:190.9px;width:4.3px;height:4.7px;border:0.8px solid #858d9e;box-sizing:border-box;background:#f6f8fb;border-radius:.6px"></div>
<svg class="cjs" style="left:50.4px;top:190.5px;color:rgba(10,14,28,0.91);stroke-width:1.7" width="19.6" height="5.4"><use href="#g0" x="0.00" y="0" width="4.45" height="5.40"/><use href="#g5" x="4.90" y="0" width="4.45" height="5.40"/><use href="#g7" x="9.80" y="0" width="4.45" height="5.40"/><use href="#g6" x="14.70" y="0" width="4.45" height="5.40"/></svg>
<div class="a" style="left:32.2px;top:200.0px;width:2.8px;height:2.8px;background:#a0a5b2;border-radius:.6px"></div>
<div class="a" style="left:37.6px;top:199.1px;width:4.3px;height:4.7px;border:0.8px solid #858d9e;box-sizing:border-box;background:#f6f8fb;border-radius:.6px"></div>
<svg class="cjs" style="left:44.1px;top:198.7px;color:rgba(10,14,28,0.91);stroke-width:1.7" width="19.6" height="5.4"><use href="#g6" x="0.00" y="0" width="4.45" height="5.40"/><use href="#g6" x="4.90" y="0" width="4.45" height="5.40"/><use href="#g7" x="9.80" y="0" width="4.45" height="5.40"/><use href="#g3" x="14.70" y="0" width="4.45" height="5.40"/></svg>
<div class="a" style="left:26.1px;top:208.2px;width:2.8px;height:2.8px;background:#a0a5b2;border-radius:.6px"></div>
<div class="a" style="left:31.4px;top:207.2px;width:4.4px;height:4.8px;border:0.8px solid #7c86b4;box-sizing:border-box;background:#d0d6f6;border-radius:.6px"></div>
<svg class="cjs" style="left:37.8px;top:206.9px;color:rgba(10,14,28,0.91);stroke-width:1.7" width="14.7" height="5.4"><use href="#g3" x="0.00" y="0" width="4.45" height="5.40"/><use href="#g7" x="4.90" y="0" width="4.45" height="5.40"/><use href="#g2" x="9.80" y="0" width="4.45" height="5.40"/></svg>
<div class="a" style="left:32.2px;top:216.4px;width:2.8px;height:2.8px;background:#a0a5b2;border-radius:.6px"></div>
<div class="a" style="left:37.5px;top:215.4px;width:4.4px;height:4.8px;border:0.8px solid #7c86b4;box-sizing:border-box;background:#d0d6f6;border-radius:.6px"></div>
<svg class="cjs" style="left:44.1px;top:215.1px;color:rgba(10,14,28,0.91);stroke-width:1.7" width="14.7" height="5.4"><use href="#g0" x="0.00" y="0" width="4.45" height="5.40"/><use href="#g8" x="4.90" y="0" width="4.45" height="5.40"/><use href="#g3" x="9.80" y="0" width="4.45" height="5.40"/></svg>
<div class="a" style="left:38.3px;top:224.6px;width:2.8px;height:2.8px;background:#a0a5b2;border-radius:.6px"></div>
<div class="a" style="left:43.7px;top:223.6px;width:4.4px;height:4.8px;border:0.8px solid #7c86b4;box-sizing:border-box;background:#d0d6f6;border-radius:.6px"></div>
<svg class="cjs" style="left:50.4px;top:223.3px;color:rgba(10,14,28,0.91);stroke-width:1.7" width="9.8" height="5.4"><use href="#g2" x="0.00" y="0" width="4.45" height="5.40"/><use href="#g9" x="4.90" y="0" width="4.45" height="5.40"/></svg>
<div class="a" style="left:49.8px;top:231.8px;width:4.4px;height:4.4px;border:0.9px solid #7a84cc;box-sizing:border-box;background:#d4d8f6;border-radius:50%"></div>
<span class="t" style="left:56.7px;top:231.0px;font:normal 5.6px/6.7px 'Liberation Sans',sans-serif;color:#333;">T -55</span>
<div class="a" style="left:43.8px;top:240.0px;width:4.3px;height:4.7px;border:0.8px solid #858d9e;box-sizing:border-box;background:#f6f8fb;border-radius:.6px"></div>
<svg class="cjs" style="left:50.4px;top:239.6px;color:rgba(10,14,28,0.91);stroke-width:1.7" width="24.5" height="5.4"><use href="#g1" x="0.00" y="0" width="4.45" height="5.40"/><use href="#g5" x="4.90" y="0" width="4.45" height="5.40"/><use href="#g0" x="9.80" y="0" width="4.45" height="5.40"/><use href="#g1" x="14.70" y="0" width="4.45" height="5.40"/><use href="#g2" x="19.60" y="0" width="4.45" height="5.40"/></svg>
<div class="a" style="left:43.8px;top:248.2px;width:4.3px;height:4.7px;border:0.8px solid #858d9e;box-sizing:border-box;background:#f6f8fb;border-radius:.6px"></div>
<svg class="cjs" style="left:50.4px;top:247.8px;color:rgba(10,14,28,0.91);stroke-width:1.7" width="24.5" height="5.4"><use href="#g9" x="0.00" y="0" width="4.45" height="5.40"/><use href="#g3" x="4.90" y="0" width="4.45" height="5.40"/><use href="#g7" x="9.80" y="0" width="4.45" height="5.40"/><use href="#g2" x="14.70" y="0" width="4.45" height="5.40"/><use href="#g8" x="19.60" y="0" width="4.45" height="5.40"/></svg>
<div class="a" style="left:43.8px;top:256.4px;width:4.3px;height:4.7px;border:0.8px solid #858d9e;box-sizing:border-box;background:#f6f8fb;border-radius:.6px"></div>
<svg class="cjs" style="left:50.4px;top:256.0px;color:rgba(10,14,28,0.91);stroke-width:1.7" width="9.8" height="5.4"><use href="#g1" x="0.00" y="0" width="4.45" height="5.40"/><use href="#g7" x="4.90" y="0" width="4.45" height="5.40"/></svg>
<div class="a" style="left:32.2px;top:265.5px;width:2.8px;height:2.8px;background:#a0a5b2;border-radius:.6px"></div>
<div class="a" style="left:37.6px;top:264.6px;width:4.3px;height:4.7px;border:0.8px solid #858d9e;box-sizing:border-box;background:#f6f8fb;border-radius:.6px"></div>
<svg class="cjs" style="left:44.1px;top:264.2px;color:rgba(10,14,28,0.91);stroke-width:1.7" width="14.7" height="5.4"><use href="#g9" x="0.00" y="0" width="4.45" height="5.40"/><use href="#g3" x="4.90" y="0" width="4.45" height="5.40"/><use href="#g7" x="9.80" y="0" width="4.45" height="5.40"/></svg>
<div class="a" style="left:20.0px;top:273.6px;width:2.8px;height:2.8px;background:#a0a5b2;border-radius:.6px"></div>
<div class="a" style="left:25.4px;top:272.7px;width:4.3px;height:4.7px;border:0.8px solid #858d9e;box-sizing:border-box;background:#f6f8fb;border-radius:.6px"></div>
<svg class="cjs" style="left:31.5px;top:272.3px;color:rgba(10,14,28,0.91);stroke-width:1.7" width="14.7" height="5.4"><use href="#g9" x="0.00" y="0" width="4.45" height="5.40"/><use href="#g4" x="4.90" y="0" width="4.45" height="5.40"/><use href="#g8" x="9.80" y="0" width="4.45" height="5.40"/></svg>
<div class="a" style="left:20.0px;top:281.8px;width:2.8px;height:2.8px;background:#a0a5b2;border-radius:.6px"></div>
<div class="a" style="left:25.3px;top:280.8px;width:4.4px;height:4.8px;border:0.8px solid #7c86b4;box-sizing:border-box;background:#d0d6f6;border-radius:.6px"></div>
<svg class="cjs" style="left:31.5px;top:280.5px;color:rgba(10,14,28,0.91);stroke-width:1.7" width="9.8" height="5.4"><use href="#g2" x="0.00" y="0" width="4.45" height="5.40"/><use href="#g4" x="4.90" y="0" width="4.45" height="5.40"/></svg>
<div class="a" style="left:13.9px;top:290.0px;width:2.8px;height:2.8px;background:#a0a5b2;border-radius:.6px"></div>
<div class="a" style="left:19.2px;top:289.1px;width:4.3px;height:4.7px;border:0.8px solid #858d9e;box-sizing:border-box;background:#f6f8fb;border-radius:.6px"></div>
<svg class="cjs" style="left:25.2px;top:288.7px;color:rgba(10,14,28,0.91);stroke-width:1.7" width="9.8" height="5.4"><use href="#g2" x="0.00" y="0" width="4.45" height="5.40"/><use href="#g1" x="4.90" y="0" width="4.45" height="5.40"/></svg>
<div class="a" style="left:7.8px;top:298.2px;width:2.8px;height:2.8px;background:#a0a5b2;border-radius:.6px"></div>
<div class="a" style="left:12.9px;top:297.2px;width:4.4px;height:4.8px;border:0.8px solid #7c86b4;box-sizing:border-box;background:#d0d6f6;border-radius:.6px"></div>
<svg class="cjs" style="left:18.9px;top:296.9px;color:rgba(10,14,28,0.91);stroke-width:1.7" width="9.8" height="5.4"><use href="#g5" x="0.00" y="0" width="4.45" height="5.40"/><use href="#g7" x="4.90" y="0" width="4.45" height="5.40"/></svg>
<div class="a" style="left:13.0px;top:305.5px;width:4.3px;height:4.7px;border:0.8px solid #858d9e;box-sizing:border-box;background:#f6f8fb;border-radius:.6px"></div>
<svg class="cjs" style="left:18.9px;top:305.1px;color:rgba(10,14,28,0.91);stroke-width:1.7" width="9.8" height="5.4"><use href="#g1" x="0.00" y="0" width="4.45" height="5.40"/><use href="#g7" x="4.90" y="0" width="4.45" height="5.40"/></svg>
<div class="a" style="left:7.8px;top:314.5px;width:2.8px;height:2.8px;background:#a0a5b2;border-radius:.6px"></div>
<div class="a" style="left:12.9px;top:313.5px;width:4.4px;height:4.8px;border:0.8px solid #7c86b4;box-sizing:border-box;background:#d0d6f6;border-radius:.6px"></div>
<svg class="cjs" style="left:18.9px;top:313.2px;color:rgba(10,14,28,0.91);stroke-width:1.7" width="19.6" height="5.4"><use href="#g1" x="0.00" y="0" width="4.45" height="5.40"/><use href="#g6" x="4.90" y="0" width="4.45" height="5.40"/><use href="#g1" x="9.80" y="0" width="4.45" height="5.40"/><use href="#g0" x="14.70" y="0" width="4.45" height="5.40"/></svg>
<div class="a" style="left:13.0px;top:321.8px;width:4.3px;height:4.7px;border:0.8px solid #858d9e;box-sizing:border-box;background:#f6f8fb;border-radius:.6px"></div>
<svg class="cjs" style="left:18.9px;top:321.4px;color:rgba(10,14,28,0.91);stroke-width:1.7" width="9.8" height="5.4"><use href="#g7" x="0.00" y="0" width="4.45" height="5.40"/><use href="#g8" x="4.90" y="0" width="4.45" height="5.40"/></svg>
<div class="a" style="left:1.7px;top:330.9px;width:2.8px;height:2.8px;background:#a0a5b2;border-radius:.6px"></div>
<div class="a" style="left:6.8px;top:329.9px;width:4.4px;height:4.8px;border:0.8px solid #7c86b4;box-sizing:border-box;background:#d0d6f6;border-radius:.6px"></div>
<svg class="cjs" style="left:12.6px;top:329.6px;color:rgba(10,14,28,0.91);stroke-width:1.7" width="14.7" height="5.4"><use href="#g7" x="0.00" y="0" width="4.45" height="5.40"/><use href="#g8" x="4.90" y="0" width="4.45" height="5.40"/><use href="#g9" x="9.80" y="0" width="4.45" height="5.40"/></svg>
<div class="a" style="left:7.8px;top:339.1px;width:2.8px;height:2.8px;background:#a0a5b2;border-radius:.6px"></div>
<div class="a" style="left:12.9px;top:338.1px;width:4.4px;height:4.8px;border:0.8px solid #7c86b4;box-sizing:border-box;background:#d0d6f6;border-radius:.6px"></div>
<svg class="cjs" style="left:18.9px;top:337.8px;color:rgba(10,14,28,0.91);stroke-width:1.7" width="9.8" height="5.4"><use href="#g5" x="0.00" y="0" width="4.45" height="5.40"/><use href="#g6" x="4.90" y="0" width="4.45" height="5.40"/></svg>
<div class="a" style="left:7.8px;top:347.3px;width:2.8px;height:2.8px;background:#a0a5b2;border-radius:.6px"></div>
<div class="a" style="left:12.9px;top:346.3px;width:4.4px;height:4.8px;border:0.8px solid #7c86b4;box-sizing:border-box;background:#d0d6f6;border-radius:.6px"></div>
<svg class="cjs" style="left:18.9px;top:346.0px;color:rgba(10,14,28,0.91);stroke-width:1.7" width="9.8" height="5.4"><use href="#g1" x="0.00" y="0" width="4.45" height="5.40"/><use href="#g2" x="4.90" y="0" width="4.45" height="5.40"/></svg>
<div class="a" style="left:72.8px;top:0;width:7.7px;height:348px;background:#fdfdfe;border-left:0.6px solid #d5dbe6;box-sizing:border-box"></div>
<div class="a" style="left:73.6px;top:10px;width:6.2px;height:250px;background:#fff;border:0.5px solid #e0e4ec;box-sizing:border-box;border-radius:1px"></div>
<div class="a" style="left:74.7px;top:3.8px;width:0;height:0;border-left:1.7px solid transparent;border-right:1.7px solid transparent;border-bottom:2.4px solid #333"></div>
<div class="a" style="left:74.9px;top:342.3px;width:0;height:0;border-left:1.7px solid transparent;border-right:1.7px solid transparent;border-top:2.4px solid #333"></div>
<div class="a" style="left:75.6px;top:131px;width:2.4px;height:3.6px;background:repeating-linear-gradient(180deg,#99a 0 .7px,transparent .7px 1.4px)"></div>
</div>
<div class="a" style="left:84.5px;top:55px;width:503px;height:1px;background:#a9b3c4"></div>
<div class="a" style="left:85px;top:56px;width:501.5px;height:12.4px;background:linear-gradient(180deg,#cbdaee,#c4d5ec)"></div>
<div class="a" style="left:85px;top:68px;width:503.4px;height:1.5px;background:#fbfcfe"></div>
<div class="a" style="left:85.2px;top:68px;width:1px;height:346px;background:#e6edf8"></div>
<div class="a" style="left:586.4px;top:56px;width:2px;height:358px;background:#fbfcfe"></div>
<div class="a" style="left:128.6px;top:57px;width:14px;height:12px;background:#fdfdfe;border-radius:1.5px 1.5px 0 0;border:0.5px solid #b4bfd0;border-bottom:none;box-sizing:border-box"></div>
<svg class="cjs" style="left:88.3px;top:60.4px;color:rgba(40,52,82,0.78);stroke-width:1.5" width="9.6" height="5.2"><use href="#g5" x="0.00" y="0" width="4.30" height="5.20"/><use href="#g2" x="4.80" y="0" width="4.30" height="5.20"/></svg>
<svg class="cjs" style="left:102.7px;top:60.4px;color:rgba(40,52,82,0.78);stroke-width:1.5" width="9.6" height="5.2"><use href="#g5" x="0.00" y="0" width="4.30" height="5.20"/><use href="#g6" x="4.80" y="0" width="4.30" height="5.20"/></svg>
<span class="t" style="left:116.6px;top:59.8px;font:normal 5.7px/6.8px 'Liberation Sans',sans-serif;color:#3c4862;">RCS</span>
<span class="t" style="left:130.2px;top:59.8px;font:bold 5.7px/6.8px 'Liberation Sans',sans-serif;color:#111;">TCS</span>
<span class="t" style="left:144.2px;top:59.8px;font:normal 5.7px/6.8px 'Liberation Sans',sans-serif;color:#3c4862;">VCS</span>
<svg class="cjs" style="left:157.3px;top:60.4px;color:rgba(40,52,82,0.78);stroke-width:1.5" width="19.4" height="5.2"><use href="#g7" x="0.00" y="0" width="4.35" height="5.20"/><use href="#g7" x="4.85" y="0" width="4.35" height="5.20"/><use href="#g6" x="9.70" y="0" width="4.35" height="5.20"/><use href="#g3" x="14.55" y="0" width="4.35" height="5.20"/></svg>
<svg class="cjs" style="left:181.7px;top:60.4px;color:rgba(40,52,82,0.78);stroke-width:1.5" width="24.2" height="5.2"><use href="#g8" x="0.00" y="0" width="4.35" height="5.20"/><use href="#g2" x="4.85" y="0" width="4.35" height="5.20"/><use href="#g5" x="9.70" y="0" width="4.35" height="5.20"/><use href="#g4" x="14.55" y="0" width="4.35" height="5.20"/><use href="#g0" x="19.40" y="0" width="4.35" height="5.20"/></svg>
<svg class="cjs" style="left:210.0px;top:60.4px;color:rgba(40,52,82,0.78);stroke-width:1.5" width="40.0" height="5.2"><use href="#g5" x="0.00" y="0" width="4.50" height="5.20"/><use href="#g2" x="5.00" y="0" width="4.50" height="5.20"/><use href="#g2" x="10.00" y="0" width="4.50" height="5.20"/><use href="#g1" x="15.00" y="0" width="4.50" height="5.20"/><use href="#g9" x="20.00" y="0" width="4.50" height="5.20"/><use href="#g2" x="25.00" y="0" width="4.50" height="5.20"/><use href="#g9" x="30.00" y="0" width="4.50" height="5.20"/><use href="#g8" x="35.00" y="0" width="4.50" height="5.20"/></svg>
<svg class="cjs" style="left:254.0px;top:60.4px;color:rgba(40,52,82,0.78);stroke-width:1.5" width="19.4" height="5.2"><use href="#g5" x="0.00" y="0" width="4.35" height="5.20"/><use href="#g5" x="4.85" y="0" width="4.35" height="5.20"/><use href="#g8" x="9.70" y="0" width="4.35" height="5.20"/><use href="#g8" x="14.55" y="0" width="4.35" height="5.20"/></svg>
<svg class="cjs" style="left:277.5px;top:60.4px;color:rgba(40,52,82,0.78);stroke-width:1.5" width="9.6" height="5.2"><use href="#g0" x="0.00" y="0" width="4.30" height="5.20"/><use href="#g9" x="4.80" y="0" width="4.30" height="5.20"/></svg>
<span class="t" style="left:288.0px;top:59.6px;font:normal 5.6px/6.7px 'Liberation Sans',sans-serif;color:#3c4862;">(</span>
<svg class="cjs" style="left:290.6px;top:60.4px;color:rgba(40,52,82,0.78);stroke-width:1.5" width="9.4" height="5.2"><use href="#g1" x="0.00" y="0" width="4.20" height="5.20"/><use href="#g7" x="4.70" y="0" width="4.20" height="5.20"/></svg>
<span class="t" style="left:300.6px;top:59.6px;font:normal 5.6px/6.7px 'Liberation Sans',sans-serif;color:#3c4862;">)</span>
<svg class="cjs" style="left:303.0px;top:60.4px;color:rgba(40,52,82,0.78);stroke-width:1.5" width="4.8" height="5.2"><use href="#g5" x="0.00" y="0" width="4.30" height="5.20"/></svg>
<span class="t" style="left:308.0px;top:59.8px;font:normal 5.6px/6.7px 'Liberation Sans',sans-serif;color:#3c4862;">ECM</span>
<svg class="cjs" style="left:320.6px;top:60.4px;color:rgba(40,52,82,0.78);stroke-width:1.5" width="10.0" height="5.2"><use href="#g8" x="0.00" y="0" width="4.50" height="5.20"/><use href="#g2" x="5.00" y="0" width="4.50" height="5.20"/></svg>
<svg class="cjs" style="left:336.7px;top:60.4px;color:rgba(40,52,82,0.78);stroke-width:1.5" width="14.4" height="5.2"><use href="#g1" x="0.00" y="0" width="4.30" height="5.20"/><use href="#g7" x="4.80" y="0" width="4.30" height="5.20"/><use href="#g4" x="9.60" y="0" width="4.30" height="5.20"/></svg>
<span class="t" style="left:352.0px;top:59.6px;font:normal 5.6px/6.7px 'Liberation Sans',sans-serif;color:#3c4862;">(</span>
<svg class="cjs" style="left:354.6px;top:60.4px;color:rgba(40,52,82,0.78);stroke-width:1.5" width="9.4" height="5.2"><use href="#g1" x="0.00" y="0" width="4.20" height="5.20"/><use href="#g5" x="4.70" y="0" width="4.20" height="5.20"/></svg>
<span class="t" style="left:364.6px;top:59.6px;font:normal 5.6px/6.7px 'Liberation Sans',sans-serif;color:#3c4862;">)</span>
<span class="t" style="left:367.6px;top:59.8px;font:normal 5.6px/6.7px 'Liberation Sans',sans-serif;color:#3c4862;">ECM</span>
<svg class="cjs" style="left:380.2px;top:60.4px;color:rgba(40,52,82,0.78);stroke-width:1.5" width="10.0" height="5.2"><use href="#g3" x="0.00" y="0" width="4.50" height="5.20"/><use href="#g7" x="5.00" y="0" width="4.50" height="5.20"/></svg>
<svg class="cjs" style="left:396.0px;top:60.4px;color:rgba(40,52,82,0.78);stroke-width:1.5" width="19.2" height="5.2"><use href="#g0" x="0.00" y="0" width="4.30" height="5.20"/><use href="#g4" x="4.80" y="0" width="4.30" height="5.20"/><use href="#g3" x="9.60" y="0" width="4.30" height="5.20"/><use href="#g6" x="14.40" y="0" width="4.30" height="5.20"/></svg>
<svg class="cjs" style="left:419.3px;top:60.4px;color:rgba(40,52,82,0.78);stroke-width:1.5" width="9.8" height="5.2"><use href="#g9" x="0.00" y="0" width="4.40" height="5.20"/><use href="#g2" x="4.90" y="0" width="4.40" height="5.20"/></svg>
<svg class="cjs" style="left:433.3px;top:60.4px;color:rgba(40,52,82,0.78);stroke-width:1.5" width="9.4" height="5.2"><use href="#g7" x="0.00" y="0" width="4.20" height="5.20"/><use href="#g7" x="4.70" y="0" width="4.20" height="5.20"/></svg>
<span class="t" style="left:442.8px;top:59.8px;font:normal 5.6px/6.7px 'Liberation Sans',sans-serif;color:#3c4862;">/</span>
<svg class="cjs" style="left:444.8px;top:60.4px;color:rgba(40,52,82,0.78);stroke-width:1.5" width="9.4" height="5.2"><use href="#g5" x="0.00" y="0" width="4.20" height="5.20"/><use href="#g7" x="4.70" y="0" width="4.20" height="5.20"/></svg>
<span class="t" style="left:459.2px;top:59.8px;font:normal 5.7px/6.8px 'Liberation Sans',sans-serif;color:#3c4862;">DIS</span>
<span class="t" style="left:576.0px;top:58.4px;font:normal 6px/7.2px 'Liberation Sans',sans-serif;color:#a8b4c8;">‹</span>
<span class="t" style="left:581.5px;top:58.4px;font:normal 6px/7.2px 'Liberation Sans',sans-serif;color:#a8b4c8;">›</span>
<div class="a" style="left:100.3px;top:58.5px;width:0.5px;height:8px;background:#b2c0d8"></div>
<div class="a" style="left:114.3px;top:58.5px;width:0.5px;height:8px;background:#b2c0d8"></div>
<div class="a" style="left:128.2px;top:58.5px;width:0.5px;height:8px;background:#b2c0d8"></div>
<div class="a" style="left:143.2px;top:58.5px;width:0.5px;height:8px;background:#b2c0d8"></div>
<div class="a" style="left:155.3px;top:58.5px;width:0.5px;height:8px;background:#b2c0d8"></div>
<div class="a" style="left:179.2px;top:58.5px;width:0.5px;height:8px;background:#b2c0d8"></div>
<div class="a" style="left:208px;top:58.5px;width:0.5px;height:8px;background:#b2c0d8"></div>
<div class="a" style="left:252px;top:58.5px;width:0.5px;height:8px;background:#b2c0d8"></div>
<div class="a" style="left:275.3px;top:58.5px;width:0.5px;height:8px;background:#b2c0d8"></div>
<div class="a" style="left:334.7px;top:58.5px;width:0.5px;height:8px;background:#b2c0d8"></div>
<div class="a" style="left:393.3px;top:58.5px;width:0.5px;height:8px;background:#b2c0d8"></div>
<div class="a" style="left:417.2px;top:58.5px;width:0.5px;height:8px;background:#b2c0d8"></div>
<div class="a" style="left:431.3px;top:58.5px;width:0.5px;height:8px;background:#b2c0d8"></div>
<div class="a" style="left:456.6px;top:58.5px;width:0.5px;height:8px;background:#b2c0d8"></div>
<div class="a" style="left:469px;top:58.5px;width:0.5px;height:8px;background:#b2c0d8"></div>
<svg class="cjs" style="left:90.0px;top:74.5px;color:rgba(10,12,25,1.00);stroke-width:1.5" width="15.0" height="5.6"><use href="#g0" x="0.00" y="0" width="4.40" height="5.60"/><use href="#g5" x="5.00" y="0" width="4.40" height="5.60"/><use href="#g6" x="10.00" y="0" width="4.40" height="5.60"/></svg>
<div class="a" style="left:107.0px;top:77px;width:106.3px;height:0.7px;background:#bac9e0"></div>
<div class="a" style="left:107.0px;top:77.8px;width:106.3px;height:0.6px;background:#cddaee"></div>
<svg class="cjs" style="left:228.3px;top:74.5px;color:rgba(10,12,25,1.00);stroke-width:1.5" width="15.0" height="5.6"><use href="#g6" x="0.00" y="0" width="4.40" height="5.60"/><use href="#g0" x="5.00" y="0" width="4.40" height="5.60"/><use href="#g7" x="10.00" y="0" width="4.40" height="5.60"/></svg>
<div class="a" style="left:245.3px;top:77px;width:106.5px;height:0.7px;background:#bac9e0"></div>
<div class="a" style="left:245.3px;top:77.8px;width:106.5px;height:0.6px;background:#cddaee"></div>
<svg class="cjs" style="left:366.7px;top:74.5px;color:rgba(10,12,25,1.00);stroke-width:1.5" width="25.0" height="5.6"><use href="#g2" x="0.00" y="0" width="4.40" height="5.60"/><use href="#g2" x="5.00" y="0" width="4.40" height="5.60"/><use href="#g8" x="10.00" y="0" width="4.40" height="5.60"/><use href="#g5" x="15.00" y="0" width="4.40" height="5.60"/><use href="#g8" x="20.00" y="0" width="4.40" height="5.60"/></svg>
<div class="a" style="left:393.7px;top:77px;width:96.1px;height:0.7px;background:#bac9e0"></div>
<div class="a" style="left:393.7px;top:77.8px;width:96.1px;height:0.6px;background:#cddaee"></div>
<div class="a" style="left:220px;top:70px;width:0.8px;height:200px;background:linear-gradient(180deg,#d3e0f2 0,#d3e0f2 70%,rgba(211,224,242,0))"></div>
<div class="a" style="left:358.5px;top:70px;width:0.8px;height:200px;background:linear-gradient(180deg,#d3e0f2 0,#d3e0f2 70%,rgba(211,224,242,0))"></div>
<svg style="left:89.3px;top:84px" width="124" height="116.3" viewBox="89.3 84 124 116.3"><rect x="89.3" y="84" width="124" height="116.3" fill="#000"/><line x1="151.6" y1="142.0" x2="151.6" y2="89.2" stroke="#989898" stroke-width="0.62"/><line x1="149.6" y1="131.8" x2="153.6" y2="131.8" stroke="#cfcfcf" stroke-width="0.6"/><line x1="149.6" y1="121.5" x2="153.6" y2="121.5" stroke="#cfcfcf" stroke-width="0.6"/><line x1="149.6" y1="111.3" x2="153.6" y2="111.3" stroke="#cfcfcf" stroke-width="0.6"/><line x1="149.6" y1="101.0" x2="153.6" y2="101.0" stroke="#cfcfcf" stroke-width="0.6"/><line x1="149.6" y1="90.8" x2="153.6" y2="90.8" stroke="#cfcfcf" stroke-width="0.6"/><text x="151.6" y="87.9" font-size="4.2" fill="#f2f2f2" text-anchor="middle" font-family="Liberation Sans, sans-serif">000</text><line x1="151.6" y1="142.0" x2="176.7" y2="101.5" stroke="#989898" stroke-width="0.62"/><line x1="154.8" y1="133.1" x2="158.2" y2="135.2" stroke="#cfcfcf" stroke-width="0.6"/><line x1="159.6" y1="125.2" x2="163.0" y2="127.3" stroke="#cfcfcf" stroke-width="0.6"/><line x1="164.5" y1="117.4" x2="167.9" y2="119.5" stroke="#cfcfcf" stroke-width="0.6"/><line x1="169.4" y1="109.5" x2="172.8" y2="111.6" stroke="#cfcfcf" stroke-width="0.6"/><line x1="174.2" y1="101.7" x2="177.6" y2="103.8" stroke="#cfcfcf" stroke-width="0.6"/><text x="179.2" y="98.2" font-size="4.2" fill="#f2f2f2" text-anchor="middle" font-family="Liberation Sans, sans-serif">036</text><line x1="151.6" y1="142.0" x2="194.7" y2="127.8" stroke="#989898" stroke-width="0.62"/><line x1="159.3" y1="137.3" x2="160.6" y2="141.1" stroke="#cfcfcf" stroke-width="0.6"/><line x1="167.7" y1="134.6" x2="168.9" y2="138.4" stroke="#cfcfcf" stroke-width="0.6"/><line x1="176.1" y1="131.8" x2="177.3" y2="135.6" stroke="#cfcfcf" stroke-width="0.6"/><line x1="184.4" y1="129.1" x2="185.7" y2="132.9" stroke="#cfcfcf" stroke-width="0.6"/><line x1="192.8" y1="126.3" x2="194.0" y2="130.1" stroke="#cfcfcf" stroke-width="0.6"/><text x="197.8" y="126.5" font-size="4.2" fill="#f2f2f2" text-anchor="middle" font-family="Liberation Sans, sans-serif">072</text><line x1="151.6" y1="142.0" x2="195.2" y2="157.5" stroke="#989898" stroke-width="0.62"/><line x1="160.7" y1="143.1" x2="159.4" y2="146.9" stroke="#cfcfcf" stroke-width="0.6"/><line x1="169.2" y1="146.1" x2="167.8" y2="149.9" stroke="#cfcfcf" stroke-width="0.6"/><line x1="177.6" y1="149.1" x2="176.3" y2="152.9" stroke="#cfcfcf" stroke-width="0.6"/><line x1="186.1" y1="152.1" x2="184.8" y2="155.9" stroke="#cfcfcf" stroke-width="0.6"/><line x1="194.6" y1="155.2" x2="193.2" y2="158.9" stroke="#cfcfcf" stroke-width="0.6"/><text x="198.6" y="160.8" font-size="4.2" fill="#f2f2f2" text-anchor="middle" font-family="Liberation Sans, sans-serif">108</text><line x1="151.6" y1="142.0" x2="177.9" y2="184" stroke="#989898" stroke-width="0.62"/><line x1="158.4" y1="149.1" x2="155.0" y2="151.2" stroke="#cfcfcf" stroke-width="0.6"/><line x1="163.5" y1="157.2" x2="160.1" y2="159.4" stroke="#cfcfcf" stroke-width="0.6"/><line x1="168.6" y1="165.4" x2="165.2" y2="167.5" stroke="#cfcfcf" stroke-width="0.6"/><line x1="173.7" y1="173.5" x2="170.3" y2="175.7" stroke="#cfcfcf" stroke-width="0.6"/><line x1="178.8" y1="181.7" x2="175.4" y2="183.8" stroke="#cfcfcf" stroke-width="0.6"/><text x="180.0" y="188.4" font-size="4.2" fill="#f2f2f2" text-anchor="middle" font-family="Liberation Sans, sans-serif">144</text><line x1="151.6" y1="142.0" x2="151.6" y2="193.6" stroke="#989898" stroke-width="0.62"/><line x1="153.6" y1="152.0" x2="149.6" y2="152.0" stroke="#cfcfcf" stroke-width="0.6"/><line x1="153.6" y1="162.0" x2="149.6" y2="162.0" stroke="#cfcfcf" stroke-width="0.6"/><line x1="153.6" y1="172.0" x2="149.6" y2="172.0" stroke="#cfcfcf" stroke-width="0.6"/><line x1="153.6" y1="182.0" x2="149.6" y2="182.0" stroke="#cfcfcf" stroke-width="0.6"/><line x1="153.6" y1="192.1" x2="149.6" y2="192.1" stroke="#cfcfcf" stroke-width="0.6"/><text x="151.6" y="198.8" font-size="4.2" fill="#f2f2f2" text-anchor="middle" font-family="Liberation Sans, sans-serif">180</text><line x1="151.6" y1="142.0" x2="126.4" y2="184" stroke="#989898" stroke-width="0.62"/><line x1="148.4" y1="151.2" x2="145.0" y2="149.1" stroke="#cfcfcf" stroke-width="0.6"/><line x1="143.5" y1="159.3" x2="140.1" y2="157.3" stroke="#cfcfcf" stroke-width="0.6"/><line x1="138.6" y1="167.5" x2="135.2" y2="165.4" stroke="#cfcfcf" stroke-width="0.6"/><line x1="133.8" y1="175.6" x2="130.3" y2="173.6" stroke="#cfcfcf" stroke-width="0.6"/><line x1="128.9" y1="183.8" x2="125.4" y2="181.7" stroke="#cfcfcf" stroke-width="0.6"/><text x="122.5" y="188.4" font-size="4.2" fill="#f2f2f2" text-anchor="middle" font-family="Liberation Sans, sans-serif">216</text><line x1="151.6" y1="142.0" x2="108.3" y2="157.5" stroke="#989898" stroke-width="0.62"/><line x1="143.9" y1="146.9" x2="142.5" y2="143.1" stroke="#cfcfcf" stroke-width="0.6"/><line x1="135.5" y1="149.9" x2="134.1" y2="146.1" stroke="#cfcfcf" stroke-width="0.6"/><line x1="127.1" y1="152.9" x2="125.7" y2="149.1" stroke="#cfcfcf" stroke-width="0.6"/><line x1="118.7" y1="155.9" x2="117.3" y2="152.1" stroke="#cfcfcf" stroke-width="0.6"/><line x1="110.3" y1="158.9" x2="108.9" y2="155.2" stroke="#cfcfcf" stroke-width="0.6"/><text x="105.0" y="160.8" font-size="4.2" fill="#f2f2f2" text-anchor="middle" font-family="Liberation Sans, sans-serif">252</text><line x1="151.6" y1="142.0" x2="109.1" y2="127.3" stroke="#989898" stroke-width="0.62"/><line x1="142.7" y1="141.0" x2="144.0" y2="137.3" stroke="#cfcfcf" stroke-width="0.6"/><line x1="134.5" y1="138.2" x2="135.8" y2="134.4" stroke="#cfcfcf" stroke-width="0.6"/><line x1="126.2" y1="135.3" x2="127.5" y2="131.6" stroke="#cfcfcf" stroke-width="0.6"/><line x1="118.0" y1="132.5" x2="119.3" y2="128.7" stroke="#cfcfcf" stroke-width="0.6"/><line x1="109.7" y1="129.6" x2="111.0" y2="125.9" stroke="#cfcfcf" stroke-width="0.6"/><text x="105.8" y="126.5" font-size="4.2" fill="#f2f2f2" text-anchor="middle" font-family="Liberation Sans, sans-serif">288</text><line x1="151.6" y1="142.0" x2="127.2" y2="101.5" stroke="#989898" stroke-width="0.62"/><line x1="145.2" y1="135.2" x2="148.6" y2="133.1" stroke="#cfcfcf" stroke-width="0.6"/><line x1="140.4" y1="127.3" x2="143.8" y2="125.3" stroke="#cfcfcf" stroke-width="0.6"/><line x1="135.7" y1="119.5" x2="139.1" y2="117.4" stroke="#cfcfcf" stroke-width="0.6"/><line x1="131.0" y1="111.6" x2="134.4" y2="109.5" stroke="#cfcfcf" stroke-width="0.6"/><line x1="126.2" y1="103.7" x2="129.6" y2="101.7" stroke="#cfcfcf" stroke-width="0.6"/><text x="122.0" y="98.2" font-size="4.2" fill="#f2f2f2" text-anchor="middle" font-family="Liberation Sans, sans-serif">324</text><text x="149.0" y="143.3" font-size="4.2" fill="#f2f2f2" text-anchor="end" font-family="Liberation Sans, sans-serif">0.00</text><text x="149.0" y="133.1" font-size="4.2" fill="#f2f2f2" text-anchor="end" font-family="Liberation Sans, sans-serif">1.00</text><text x="149.0" y="122.9" font-size="4.2" fill="#f2f2f2" text-anchor="end" font-family="Liberation Sans, sans-serif">2.00</text><text x="149.0" y="112.7" font-size="4.2" fill="#f2f2f2" text-anchor="end" font-family="Liberation Sans, sans-serif">3.00</text><text x="149.0" y="102.5" font-size="4.2" fill="#f2f2f2" text-anchor="end" font-family="Liberation Sans, sans-serif">4.00</text><text x="149.0" y="92.3" font-size="4.2" fill="#f2f2f2" text-anchor="end" font-family="Liberation Sans, sans-serif">5.00</text><polygon points="151.6,136.3 156.8,133.8 163.0,137.6 164.0,147.2 156.8,150.5 151.6,152.3 146.2,150.5 139.3,146.6 139.3,137.6 147.0,135.6" fill="none" stroke="#d01010" stroke-width="0.6" stroke-dasharray="1.2 0.8"/><circle cx="151.6" cy="136.3" r="1.7" fill="#f01414"/><circle cx="156.8" cy="133.8" r="1.7" fill="#f01414"/><circle cx="163.0" cy="137.6" r="1.7" fill="#f01414"/><circle cx="164.0" cy="147.2" r="1.7" fill="#f01414"/><circle cx="156.8" cy="150.5" r="1.7" fill="#f01414"/><circle cx="151.6" cy="152.3" r="1.7" fill="#f01414"/><circle cx="146.2" cy="150.5" r="1.7" fill="#f01414"/><circle cx="139.3" cy="146.6" r="1.7" fill="#f01414"/><circle cx="139.3" cy="137.6" r="1.7" fill="#f01414"/><circle cx="147.0" cy="135.6" r="1.7" fill="#f01414"/><rect x="150.75" y="135.45" width="1.7" height="1.7" fill="#fff" transform="rotate(45 151.6 136.3)"/><circle cx="151.6" cy="142.0" r="1.0" fill="#fff"/></svg>
<svg style="left:227.9px;top:84px" width="123.9" height="116.3" viewBox="227.9 84 123.9 116.3"><rect x="227.9" y="84" width="123.9" height="116.3" fill="#000"/><line x1="244.7" y1="141.9" x2="244.7" y2="89.9" stroke="#989898" stroke-width="0.62"/><line x1="242.7" y1="131.8" x2="246.7" y2="131.8" stroke="#cfcfcf" stroke-width="0.6"/><line x1="242.7" y1="121.7" x2="246.7" y2="121.7" stroke="#cfcfcf" stroke-width="0.6"/><line x1="242.7" y1="111.6" x2="246.7" y2="111.6" stroke="#cfcfcf" stroke-width="0.6"/><line x1="242.7" y1="101.5" x2="246.7" y2="101.5" stroke="#cfcfcf" stroke-width="0.6"/><line x1="242.7" y1="91.5" x2="246.7" y2="91.5" stroke="#cfcfcf" stroke-width="0.6"/><text x="244.7" y="87.4" font-size="4.2" fill="#f2f2f2" text-anchor="middle" font-family="Liberation Sans, sans-serif">+90</text><line x1="244.7" y1="141.9" x2="260.7" y2="93.3" stroke="#989898" stroke-width="0.62"/><line x1="245.9" y1="131.8" x2="249.7" y2="133.1" stroke="#cfcfcf" stroke-width="0.6"/><line x1="249.0" y1="122.4" x2="252.8" y2="123.7" stroke="#cfcfcf" stroke-width="0.6"/><line x1="252.1" y1="113.0" x2="255.9" y2="114.2" stroke="#cfcfcf" stroke-width="0.6"/><line x1="255.2" y1="103.6" x2="259.0" y2="104.8" stroke="#cfcfcf" stroke-width="0.6"/><line x1="258.3" y1="94.1" x2="262.1" y2="95.4" stroke="#cfcfcf" stroke-width="0.6"/><text x="263.4" y="91.2" font-size="4.2" fill="#f2f2f2" text-anchor="middle" font-family="Liberation Sans, sans-serif">+67</text><line x1="244.7" y1="141.9" x2="276.7" y2="106.7" stroke="#989898" stroke-width="0.62"/><line x1="249.4" y1="133.7" x2="252.4" y2="136.4" stroke="#cfcfcf" stroke-width="0.6"/><line x1="255.6" y1="126.9" x2="258.6" y2="129.6" stroke="#cfcfcf" stroke-width="0.6"/><line x1="261.8" y1="120.1" x2="264.8" y2="122.8" stroke="#cfcfcf" stroke-width="0.6"/><line x1="268.1" y1="113.2" x2="271.0" y2="115.9" stroke="#cfcfcf" stroke-width="0.6"/><line x1="274.3" y1="106.4" x2="277.2" y2="109.1" stroke="#cfcfcf" stroke-width="0.6"/><text x="279.4" y="104.5" font-size="4.2" fill="#f2f2f2" text-anchor="middle" font-family="Liberation Sans, sans-serif">+45</text><line x1="244.7" y1="141.9" x2="286.9" y2="122.7" stroke="#989898" stroke-width="0.62"/><line x1="252.1" y1="136.4" x2="253.7" y2="140.0" stroke="#cfcfcf" stroke-width="0.6"/><line x1="260.2" y1="132.6" x2="261.9" y2="136.3" stroke="#cfcfcf" stroke-width="0.6"/><line x1="268.4" y1="128.9" x2="270.1" y2="132.5" stroke="#cfcfcf" stroke-width="0.6"/><line x1="276.6" y1="125.2" x2="278.3" y2="128.8" stroke="#cfcfcf" stroke-width="0.6"/><line x1="284.8" y1="121.5" x2="286.5" y2="125.1" stroke="#cfcfcf" stroke-width="0.6"/><text x="290.1" y="121.3" font-size="4.2" fill="#f2f2f2" text-anchor="middle" font-family="Liberation Sans, sans-serif">+22</text><line x1="244.7" y1="141.9" x2="289.3" y2="141.9" stroke="#989898" stroke-width="0.62"/><line x1="253.4" y1="139.9" x2="253.4" y2="143.9" stroke="#cfcfcf" stroke-width="0.6"/><line x1="262.0" y1="139.9" x2="262.0" y2="143.9" stroke="#cfcfcf" stroke-width="0.6"/><line x1="270.7" y1="139.9" x2="270.7" y2="143.9" stroke="#cfcfcf" stroke-width="0.6"/><line x1="279.3" y1="139.9" x2="279.3" y2="143.9" stroke="#cfcfcf" stroke-width="0.6"/><line x1="288.0" y1="139.9" x2="288.0" y2="143.9" stroke="#cfcfcf" stroke-width="0.6"/><text x="292.7" y="143.2" font-size="4.2" fill="#f2f2f2" text-anchor="middle" font-family="Liberation Sans, sans-serif">0</text><line x1="244.7" y1="141.9" x2="286.1" y2="161.4" stroke="#989898" stroke-width="0.62"/><line x1="253.6" y1="143.9" x2="251.9" y2="147.5" stroke="#cfcfcf" stroke-width="0.6"/><line x1="261.6" y1="147.7" x2="259.9" y2="151.3" stroke="#cfcfcf" stroke-width="0.6"/><line x1="269.6" y1="151.4" x2="267.9" y2="155.1" stroke="#cfcfcf" stroke-width="0.6"/><line x1="277.7" y1="155.2" x2="276.0" y2="158.8" stroke="#cfcfcf" stroke-width="0.6"/><line x1="285.7" y1="159.0" x2="284.0" y2="162.6" stroke="#cfcfcf" stroke-width="0.6"/><text x="289.5" y="164.9" font-size="4.2" fill="#f2f2f2" text-anchor="middle" font-family="Liberation Sans, sans-serif">-23</text><line x1="244.7" y1="141.9" x2="276.7" y2="178.8" stroke="#989898" stroke-width="0.62"/><line x1="252.4" y1="147.7" x2="249.4" y2="150.4" stroke="#cfcfcf" stroke-width="0.6"/><line x1="258.6" y1="154.9" x2="255.6" y2="157.5" stroke="#cfcfcf" stroke-width="0.6"/><line x1="264.8" y1="162.1" x2="261.8" y2="164.7" stroke="#cfcfcf" stroke-width="0.6"/><line x1="271.0" y1="169.2" x2="268.0" y2="171.8" stroke="#cfcfcf" stroke-width="0.6"/><line x1="277.3" y1="176.4" x2="274.2" y2="179.0" stroke="#cfcfcf" stroke-width="0.6"/><text x="278.6" y="182.8" font-size="4.2" fill="#f2f2f2" text-anchor="middle" font-family="Liberation Sans, sans-serif">-45</text><line x1="244.7" y1="141.9" x2="262" y2="190.8" stroke="#989898" stroke-width="0.62"/><line x1="249.9" y1="150.7" x2="246.2" y2="152.1" stroke="#cfcfcf" stroke-width="0.6"/><line x1="253.3" y1="160.2" x2="249.5" y2="161.5" stroke="#cfcfcf" stroke-width="0.6"/><line x1="256.7" y1="169.7" x2="252.9" y2="171.0" stroke="#cfcfcf" stroke-width="0.6"/><line x1="260.0" y1="179.2" x2="256.2" y2="180.5" stroke="#cfcfcf" stroke-width="0.6"/><line x1="263.4" y1="188.7" x2="259.6" y2="190.0" stroke="#cfcfcf" stroke-width="0.6"/><text x="263.4" y="193.4" font-size="4.2" fill="#f2f2f2" text-anchor="middle" font-family="Liberation Sans, sans-serif">-67</text><line x1="244.7" y1="141.9" x2="244.7" y2="193.4" stroke="#989898" stroke-width="0.62"/><line x1="246.7" y1="151.9" x2="242.7" y2="151.9" stroke="#cfcfcf" stroke-width="0.6"/><line x1="246.7" y1="161.9" x2="242.7" y2="161.9" stroke="#cfcfcf" stroke-width="0.6"/><line x1="246.7" y1="171.9" x2="242.7" y2="171.9" stroke="#cfcfcf" stroke-width="0.6"/><line x1="246.7" y1="181.9" x2="242.7" y2="181.9" stroke="#cfcfcf" stroke-width="0.6"/><line x1="246.7" y1="191.9" x2="242.7" y2="191.9" stroke="#cfcfcf" stroke-width="0.6"/><text x="244.7" y="198.5" font-size="4.2" fill="#f2f2f2" text-anchor="middle" font-family="Liberation Sans, sans-serif">-90</text><text x="241.1" y="143.2" font-size="4.2" fill="#f2f2f2" text-anchor="end" font-family="Liberation Sans, sans-serif">0.00</text><text x="241.1" y="133.1" font-size="4.2" fill="#f2f2f2" text-anchor="end" font-family="Liberation Sans, sans-serif">1.00</text><text x="241.1" y="123.0" font-size="4.2" fill="#f2f2f2" text-anchor="end" font-family="Liberation Sans, sans-serif">2.00</text><text x="241.1" y="112.9" font-size="4.2" fill="#f2f2f2" text-anchor="end" font-family="Liberation Sans, sans-serif">3.00</text><text x="241.1" y="102.8" font-size="4.2" fill="#f2f2f2" text-anchor="end" font-family="Liberation Sans, sans-serif">4.00</text><text x="241.1" y="92.7" font-size="4.2" fill="#f2f2f2" text-anchor="end" font-family="Liberation Sans, sans-serif">5.00</text><polyline points="244.2,129.9 247.9,132.1 251.4,134.7 254.0,137.9 255.9,141.9 254.0,147.3 251.4,150.2 247.9,152.9 244.2,155.5" fill="none" stroke="#d01010" stroke-width="0.6" stroke-dasharray="1.2 0.8"/><line x1="244.29999999999998" y1="130" x2="244.29999999999998" y2="155.5" stroke="#d01010" stroke-width="0.9"/><circle cx="244.2" cy="129.9" r="1.7" fill="#f01414"/><circle cx="247.9" cy="132.1" r="1.7" fill="#f01414"/><circle cx="251.4" cy="134.7" r="1.7" fill="#f01414"/><circle cx="254.0" cy="137.9" r="1.7" fill="#f01414"/><circle cx="255.9" cy="141.9" r="1.7" fill="#f01414"/><circle cx="254.0" cy="147.3" r="1.7" fill="#f01414"/><circle cx="251.4" cy="150.2" r="1.7" fill="#f01414"/><circle cx="247.9" cy="152.9" r="1.7" fill="#f01414"/><circle cx="244.2" cy="155.5" r="1.7" fill="#f01414"/><circle cx="244.7" cy="141.9" r="0.9" fill="#fff"/></svg>
<svg style="left:366.2px;top:84px" width="123.6" height="116.3" viewBox="366.2 84 123.6 116.3"><rect x="366.2" y="84" width="123.6" height="116.3" fill="#000"/><rect x="419" y="84.4" width="17.7" height="4" fill="#f2f200"/><line x1="381.9" y1="186.1" x2="381.9" y2="92.6" stroke="#d8d8d8" stroke-width="0.8"/><line x1="381.9" y1="186.1" x2="486" y2="186.1" stroke="#e8e8e8" stroke-width="0.9" stroke-dasharray="1.1 0.6"/><polygon points="380.7,93.8 383.09999999999997,93.8 381.9,91.19999999999999" fill="#eee"/><polygon points="485.6,184.79999999999998 485.6,187.4 488.2,186.1" fill="#eee"/><line x1="380.7" y1="186.1" x2="381.9" y2="186.1" stroke="#ddd" stroke-width="0.5"/><text x="379.5" y="187.4" font-size="4.2" fill="#f2f2f2" text-anchor="end" font-family="Liberation Sans, sans-serif">0.00</text><line x1="380.7" y1="177.1" x2="381.9" y2="177.1" stroke="#ddd" stroke-width="0.5"/><text x="379.5" y="178.4" font-size="4.2" fill="#f2f2f2" text-anchor="end" font-family="Liberation Sans, sans-serif">0.20</text><line x1="380.7" y1="168.0" x2="381.9" y2="168.0" stroke="#ddd" stroke-width="0.5"/><text x="379.5" y="169.4" font-size="4.2" fill="#f2f2f2" text-anchor="end" font-family="Liberation Sans, sans-serif">0.40</text><line x1="380.7" y1="159.0" x2="381.9" y2="159.0" stroke="#ddd" stroke-width="0.5"/><text x="379.5" y="160.4" font-size="4.2" fill="#f2f2f2" text-anchor="end" font-family="Liberation Sans, sans-serif">0.60</text><line x1="380.7" y1="150.0" x2="381.9" y2="150.0" stroke="#ddd" stroke-width="0.5"/><text x="379.5" y="151.3" font-size="4.2" fill="#f2f2f2" text-anchor="end" font-family="Liberation Sans, sans-serif">0.80</text><line x1="380.7" y1="140.9" x2="381.9" y2="140.9" stroke="#ddd" stroke-width="0.5"/><text x="379.5" y="142.3" font-size="4.2" fill="#f2f2f2" text-anchor="end" font-family="Liberation Sans, sans-serif">1.00</text><line x1="380.7" y1="131.9" x2="381.9" y2="131.9" stroke="#ddd" stroke-width="0.5"/><text x="379.5" y="133.3" font-size="4.2" fill="#f2f2f2" text-anchor="end" font-family="Liberation Sans, sans-serif">1.20</text><line x1="380.7" y1="122.9" x2="381.9" y2="122.9" stroke="#ddd" stroke-width="0.5"/><text x="379.5" y="124.2" font-size="4.2" fill="#f2f2f2" text-anchor="end" font-family="Liberation Sans, sans-serif">1.40</text><line x1="380.7" y1="113.9" x2="381.9" y2="113.9" stroke="#ddd" stroke-width="0.5"/><text x="379.5" y="115.2" font-size="4.2" fill="#f2f2f2" text-anchor="end" font-family="Liberation Sans, sans-serif">1.60</text><line x1="380.7" y1="104.8" x2="381.9" y2="104.8" stroke="#ddd" stroke-width="0.5"/><text x="379.5" y="106.2" font-size="4.2" fill="#f2f2f2" text-anchor="end" font-family="Liberation Sans, sans-serif">1.80</text><line x1="380.7" y1="95.8" x2="381.9" y2="95.8" stroke="#ddd" stroke-width="0.5"/><text x="379.5" y="97.1" font-size="4.2" fill="#f2f2f2" text-anchor="end" font-family="Liberation Sans, sans-serif">2.00</text><text x="381.9" y="192.1" font-size="4.2" fill="#f2f2f2" text-anchor="middle" font-family="Liberation Sans, sans-serif">0.00</text><text x="402.2" y="192.1" font-size="4.2" fill="#f2f2f2" text-anchor="middle" font-family="Liberation Sans, sans-serif">31.60</text><text x="422.5" y="192.1" font-size="4.2" fill="#f2f2f2" text-anchor="middle" font-family="Liberation Sans, sans-serif">63.20</text><text x="442.9" y="192.1" font-size="4.2" fill="#f2f2f2" text-anchor="middle" font-family="Liberation Sans, sans-serif">94.80</text><text x="463.2" y="192.1" font-size="4.2" fill="#f2f2f2" text-anchor="middle" font-family="Liberation Sans, sans-serif">126.40</text><text x="483.5" y="192.1" font-size="4.2" fill="#f2f2f2" text-anchor="middle" font-family="Liberation Sans, sans-serif">158.00</text><text transform="translate(370.6 152.4) rotate(-90)" font-size="4.1" fill="#e4e4e4" font-weight="bold" font-family="Liberation Sans, sans-serif">Gain(m^2)</text><polyline points="382.4,171.5 383.09999999999997,160 384.09999999999997,147 385.5,141 386.9,140.7 484.6,140.7" fill="none" stroke="#a00c0c" stroke-width="0.9"/><text x="432.8" y="197.8" font-size="4.1" fill="#e4e4e4" font-weight="bold" font-family="Liberation Sans, sans-serif">(Kts)</text></svg>
<svg class="cjs" style="left:423.2px;top:193.9px;color:rgba(240,240,240,0.94);stroke-width:1.6" width="9.6" height="5.0"><use href="#g9" x="0.00" y="0" width="4.30" height="5.00"/><use href="#g7" x="4.80" y="0" width="4.30" height="5.00"/></svg>
<svg class="cjs" style="left:419.6px;top:84.7px;color:rgba(40,40,0,0.55);stroke-width:1.6" width="16.4" height="3.2"><use href="#g1" x="0.00" y="0" width="3.70" height="3.20"/><use href="#g3" x="4.10" y="0" width="3.70" height="3.20"/><use href="#g9" x="8.20" y="0" width="3.70" height="3.20"/><use href="#g1" x="12.30" y="0" width="3.70" height="3.20"/></svg>
<div class="a" style="left:260.4px;top:193px;width:41.4px;height:8.4px;background:#eef2fa;border:0.5px solid #8b97ad;box-sizing:border-box;border-radius:1px;box-shadow:0.5px 0.5px 1px rgba(0,0,0,.3)"></div>
<div class="a" style="left:262px;top:194.6px;width:4.4px;height:5px;background:linear-gradient(180deg,#6a8fd8,#3a5cb0);border-radius:50% 50% 40% 40%"></div>
<svg class="cjs" style="left:268.0px;top:194.7px;color:rgba(20,25,45,0.81);stroke-width:1.5" width="9.4" height="5.0"><use href="#g9" x="0.00" y="0" width="4.20" height="5.00"/><use href="#g1" x="4.70" y="0" width="4.20" height="5.00"/></svg>
<span class="t" style="left:277.4px;top:194.5px;font:normal 5.2px/6.2px 'Liberation Mono',monospace;color:#222;transform:scaleX(0.833);transform-origin:0 50%;">:1</span>
<svg class="cjs" style="left:284.0px;top:194.7px;color:rgba(20,25,45,0.81);stroke-width:1.5" width="9.4" height="5.0"><use href="#g7" x="0.00" y="0" width="4.20" height="5.00"/><use href="#g8" x="4.70" y="0" width="4.20" height="5.00"/></svg>
<span class="t" style="left:293.4px;top:194.5px;font:normal 5.2px/6.2px 'Liberation Mono',monospace;color:#222;transform:scaleX(0.833);transform-origin:0 50%;">:9</span>
<div class="a" style="left:89.3px;top:200.3px;width:124.6px;height:12.9px;background:#c9d9ee;border:0.7px solid #dbe5f4;border-top:none;box-sizing:border-box"></div>
<div class="a" style="left:227.9px;top:200.3px;width:124.5px;height:12.9px;background:#c9d9ee;border:0.7px solid #dbe5f4;border-top:none;box-sizing:border-box"></div>
<div class="a" style="left:366.2px;top:200.3px;width:124.2px;height:12.9px;background:#c9d9ee;border:0.7px solid #dbe5f4;border-top:none;box-sizing:border-box"></div>
<svg class="cjs" style="left:92.5px;top:204.5px;color:rgba(15,20,40,0.86);stroke-width:1.5" width="10.4" height="5.4"><use href="#g8" x="0.00" y="0" width="4.70" height="5.40"/><use href="#g7" x="5.20" y="0" width="4.70" height="5.40"/></svg>
<div class="inp" style="left:112px;top:203.2px;width:19px;height:7.8px"></div><span class="t" style="left:113.5px;top:204.8px;font:normal 5.4px/6.5px 'Liberation Mono',monospace;color:#4a4a4a;transform:scaleX(0.802);transform-origin:0 50%;-webkit-text-stroke:0.12px #4a4a4a">1</span><div class="spin" style="left:131px;top:203.2px;width:6px;height:7.8px"></div><div class="a" style="left:132.5px;top:204.29999999999998px;width:0;height:0;border-left:1.5px solid transparent;border-right:1.5px solid transparent;border-bottom:2px solid #222"></div><div class="a" style="left:132.5px;top:207.9px;width:0;height:0;border-left:1.5px solid transparent;border-right:1.5px solid transparent;border-top:2px solid #222"></div>
<svg class="cjs" style="left:142.5px;top:204.5px;color:rgba(15,20,40,0.86);stroke-width:1.5" width="10.0" height="5.4"><use href="#g6" x="0.00" y="0" width="4.50" height="5.40"/><use href="#g7" x="5.00" y="0" width="4.50" height="5.40"/></svg>
<div class="inp" style="left:161px;top:203.2px;width:20px;height:7.8px"></div><span class="t" style="left:162.5px;top:204.8px;font:normal 5.4px/6.5px 'Liberation Mono',monospace;color:#4a4a4a;transform:scaleX(0.802);transform-origin:0 50%;-webkit-text-stroke:0.12px #4a4a4a">0.60</span><div class="spin" style="left:181px;top:203.2px;width:6px;height:7.8px"></div><div class="a" style="left:182.5px;top:204.29999999999998px;width:0;height:0;border-left:1.5px solid transparent;border-right:1.5px solid transparent;border-bottom:2px solid #222"></div><div class="a" style="left:182.5px;top:207.9px;width:0;height:0;border-left:1.5px solid transparent;border-right:1.5px solid transparent;border-top:2px solid #222"></div>
<svg class="cjs" style="left:230.5px;top:204.5px;color:rgba(15,20,40,0.86);stroke-width:1.5" width="10.4" height="5.4"><use href="#g9" x="0.00" y="0" width="4.70" height="5.40"/><use href="#g7" x="5.20" y="0" width="4.70" height="5.40"/></svg>
<div class="inp" style="left:250.5px;top:203.2px;width:19px;height:7.8px"></div><span class="t" style="left:252.0px;top:204.8px;font:normal 5.4px/6.5px 'Liberation Mono',monospace;color:#4a4a4a;transform:scaleX(0.802);transform-origin:0 50%;-webkit-text-stroke:0.12px #4a4a4a">1</span><div class="spin" style="left:269.5px;top:203.2px;width:6px;height:7.8px"></div><div class="a" style="left:271.0px;top:204.29999999999998px;width:0;height:0;border-left:1.5px solid transparent;border-right:1.5px solid transparent;border-bottom:2px solid #222"></div><div class="a" style="left:271.0px;top:207.9px;width:0;height:0;border-left:1.5px solid transparent;border-right:1.5px solid transparent;border-top:2px solid #222"></div>
<svg class="cjs" style="left:281.0px;top:204.5px;color:rgba(15,20,40,0.86);stroke-width:1.5" width="10.0" height="5.4"><use href="#g7" x="0.00" y="0" width="4.50" height="5.40"/><use href="#g1" x="5.00" y="0" width="4.50" height="5.40"/></svg>
<div class="inp" style="left:299.5px;top:203.2px;width:20px;height:7.8px"></div><span class="t" style="left:301.0px;top:204.8px;font:normal 5.4px/6.5px 'Liberation Mono',monospace;color:#4a4a4a;transform:scaleX(0.802);transform-origin:0 50%;-webkit-text-stroke:0.12px #4a4a4a">1.20</span><div class="spin" style="left:319.5px;top:203.2px;width:6px;height:7.8px"></div><div class="a" style="left:321.0px;top:204.29999999999998px;width:0;height:0;border-left:1.5px solid transparent;border-right:1.5px solid transparent;border-bottom:2px solid #222"></div><div class="a" style="left:321.0px;top:207.9px;width:0;height:0;border-left:1.5px solid transparent;border-right:1.5px solid transparent;border-top:2px solid #222"></div>
<svg class="cjs" style="left:368.0px;top:204.5px;color:rgba(15,20,40,0.86);stroke-width:1.5" width="10.4" height="5.4"><use href="#g2" x="0.00" y="0" width="4.70" height="5.40"/><use href="#g1" x="5.20" y="0" width="4.70" height="5.40"/></svg>
<div class="inp" style="left:391px;top:203.2px;width:19.5px;height:7.8px"></div><span class="t" style="left:392.5px;top:204.8px;font:normal 5.4px/6.5px 'Liberation Mono',monospace;color:#4a4a4a;transform:scaleX(0.802);transform-origin:0 50%;-webkit-text-stroke:0.12px #4a4a4a">0.00</span><div class="spin" style="left:410.5px;top:203.2px;width:6px;height:7.8px"></div><div class="a" style="left:412.0px;top:204.29999999999998px;width:0;height:0;border-left:1.5px solid transparent;border-right:1.5px solid transparent;border-bottom:2px solid #222"></div><div class="a" style="left:412.0px;top:207.9px;width:0;height:0;border-left:1.5px solid transparent;border-right:1.5px solid transparent;border-top:2px solid #222"></div>
<svg class="cjs" style="left:420.5px;top:204.5px;color:rgba(15,20,40,0.86);stroke-width:1.5" width="10.0" height="5.4"><use href="#g3" x="0.00" y="0" width="4.50" height="5.40"/><use href="#g2" x="5.00" y="0" width="4.50" height="5.40"/></svg>
<div class="inp" style="left:442.5px;top:203.2px;width:20px;height:7.8px"></div><span class="t" style="left:444.0px;top:204.8px;font:normal 5.4px/6.5px 'Liberation Mono',monospace;color:#4a4a4a;transform:scaleX(0.802);transform-origin:0 50%;-webkit-text-stroke:0.12px #4a4a4a">0.00</span><div class="spin" style="left:462.5px;top:203.2px;width:6px;height:7.8px"></div><div class="a" style="left:464.0px;top:204.29999999999998px;width:0;height:0;border-left:1.5px solid transparent;border-right:1.5px solid transparent;border-bottom:2px solid #222"></div><div class="a" style="left:464.0px;top:207.9px;width:0;height:0;border-left:1.5px solid transparent;border-right:1.5px solid transparent;border-top:2px solid #222"></div>
<span class="t" style="left:89.6px;top:218.6px;font:normal 5.6px/6.7px 'Liberation Mono',monospace;color:#2a2f3c;transform:scaleX(0.774);transform-origin:0 50%;-webkit-text-stroke:0.25px #2a2f3c">Base Temperature</span>
<div class="inp" style="left:151px;top:217.8px;width:29px;height:7.6px"></div><span class="t" style="left:152.5px;top:219.3px;font:normal 5.4px/6.5px 'Liberation Mono',monospace;color:#4a4a4a;transform:scaleX(0.802);transform-origin:0 50%;-webkit-text-stroke:0.12px #4a4a4a">294.00</span><div class="spin" style="left:180px;top:217.8px;width:6px;height:7.6px"></div><div class="a" style="left:181.5px;top:218.9px;width:0;height:0;border-left:1.5px solid transparent;border-right:1.5px solid transparent;border-bottom:2px solid #222"></div><div class="a" style="left:181.5px;top:222.3px;width:0;height:0;border-left:1.5px solid transparent;border-right:1.5px solid transparent;border-top:2px solid #222"></div>
<span class="t" style="left:187.6px;top:218.4px;font:bold 5.6px/6.7px 'Liberation Mono',monospace;color:#20242e;transform:scaleX(0.774);transform-origin:0 50%;-webkit-text-stroke:0.2px #20242e">K°</span>
<svg class="cjs" style="left:367.6px;top:218.1px;color:rgba(15,20,40,0.86);stroke-width:1.5" width="20.4" height="5.4"><use href="#g4" x="0.00" y="0" width="4.60" height="5.40"/><use href="#g7" x="5.10" y="0" width="4.60" height="5.40"/><use href="#g3" x="10.20" y="0" width="4.60" height="5.40"/><use href="#g2" x="15.30" y="0" width="4.60" height="5.40"/></svg>
<div class="inp" style="left:433px;top:217.20000000000002px;width:29px;height:7.2px"></div><span class="t" style="left:434.5px;top:218.5px;font:normal 5.4px/6.5px 'Liberation Mono',monospace;color:#4a4a4a;transform:scaleX(0.802);transform-origin:0 50%;-webkit-text-stroke:0.12px #4a4a4a">1.00</span><div class="spin" style="left:462px;top:217.20000000000002px;width:6px;height:7.2px"></div><div class="a" style="left:463.5px;top:218.3px;width:0;height:0;border-left:1.5px solid transparent;border-right:1.5px solid transparent;border-bottom:2px solid #222"></div><div class="a" style="left:463.5px;top:221.3px;width:0;height:0;border-left:1.5px solid transparent;border-right:1.5px solid transparent;border-top:2px solid #222"></div>
<span class="t" style="left:471.0px;top:217.6px;font:normal 5.6px/6.7px 'Liberation Mono',monospace;color:#20242e;transform:scaleX(0.774);transform-origin:0 50%;-webkit-text-stroke:0.22px #20242e">Kts</span>
<svg class="cjs" style="left:367.6px;top:229.7px;color:rgba(15,20,40,0.86);stroke-width:1.5" width="20.4" height="5.4"><use href="#g6" x="0.00" y="0" width="4.60" height="5.40"/><use href="#g7" x="5.10" y="0" width="4.60" height="5.40"/><use href="#g8" x="10.20" y="0" width="4.60" height="5.40"/><use href="#g2" x="15.30" y="0" width="4.60" height="5.40"/></svg>
<div class="inp" style="left:433px;top:228.8px;width:29px;height:7.2px"></div><span class="t" style="left:434.5px;top:230.1px;font:normal 5.4px/6.5px 'Liberation Mono',monospace;color:#4a4a4a;transform:scaleX(0.802);transform-origin:0 50%;-webkit-text-stroke:0.12px #4a4a4a">1.00</span><div class="spin" style="left:462px;top:228.8px;width:6px;height:7.2px"></div><div class="a" style="left:463.5px;top:229.9px;width:0;height:0;border-left:1.5px solid transparent;border-right:1.5px solid transparent;border-bottom:2px solid #222"></div><div class="a" style="left:463.5px;top:232.9px;width:0;height:0;border-left:1.5px solid transparent;border-right:1.5px solid transparent;border-top:2px solid #222"></div>
<svg class="cjs" style="left:367.6px;top:241.1px;color:rgba(15,20,40,0.86);stroke-width:1.5" width="30.6" height="5.4"><use href="#g0" x="0.00" y="0" width="4.60" height="5.40"/><use href="#g1" x="5.10" y="0" width="4.60" height="5.40"/><use href="#g2" x="10.20" y="0" width="4.60" height="5.40"/><use href="#g1" x="15.30" y="0" width="4.60" height="5.40"/><use href="#g6" x="20.40" y="0" width="4.60" height="5.40"/><use href="#g8" x="25.50" y="0" width="4.60" height="5.40"/></svg>
<div class="inp" style="left:433px;top:240.20000000000002px;width:29px;height:7.2px"></div><span class="t" style="left:434.5px;top:241.5px;font:normal 5.4px/6.5px 'Liberation Mono',monospace;color:#4a4a4a;transform:scaleX(0.802);transform-origin:0 50%;-webkit-text-stroke:0.12px #4a4a4a">1.00</span><div class="spin" style="left:462px;top:240.20000000000002px;width:6px;height:7.2px"></div><div class="a" style="left:463.5px;top:241.3px;width:0;height:0;border-left:1.5px solid transparent;border-right:1.5px solid transparent;border-bottom:2px solid #222"></div><div class="a" style="left:463.5px;top:244.3px;width:0;height:0;border-left:1.5px solid transparent;border-right:1.5px solid transparent;border-top:2px solid #222"></div>
<span class="t" style="left:471.0px;top:240.6px;font:normal 5.6px/6.7px 'Liberation Mono',monospace;color:#20242e;transform:scaleX(0.774);transform-origin:0 50%;-webkit-text-stroke:0.22px #20242e">m²</span>
<div class="a" style="left:588.4px;top:80px;width:10px;height:28px;background:#fbfcfe;border-radius:0 1.5px 1.5px 0"></div>
<svg class="cjs" style="left:590.2px;top:58.8px;color:rgba(20,25,45,0.81);stroke-width:1.5" width="5.4" height="5.2"><use href="#g1" x="0" y="0.00" width="5.40" height="4.70"/></svg>
<span class="t" style="left:591.2px;top:62.6px;font:normal 5px/6.0px 'Liberation Sans',sans-serif;color:#445;transform:rotate(90deg)">9</span>
<svg class="cjs" style="left:590.2px;top:82.0px;color:rgba(20,25,45,0.81);stroke-width:1.5" width="5.4" height="15.0"><use href="#g9" x="0" y="0.00" width="5.40" height="4.50"/><use href="#g2" x="0" y="5.00" width="5.40" height="4.50"/><use href="#g2" x="0" y="10.00" width="5.40" height="4.50"/></svg>
<div class="a" style="left:590.4px;top:101px;width:5.2px;height:5.2px;border:1.3px solid #d83838;border-radius:50%;box-sizing:border-box"></div>
<span class="t" style="left:585.4px;top:115.4px;width:16px;text-align:center;font:6px/7px 'Liberation Sans',sans-serif;color:#2c3446;transform:rotate(90deg);-webkit-text-stroke:0.2px #2c3446;letter-spacing:.2px">T -55</span>
<span class="t" style="left:591.6px;top:405.7px;font:bold 6px/7.2px 'Liberation Sans',sans-serif;color:#111;">×</span>
<div class="a" style="left:592px;top:395px;width:2.4px;height:0.8px;background:#a8b6cc"></div>
<div class="a" style="left:592px;top:401px;width:2.4px;height:0.8px;background:#a8b6cc"></div>
<div class="a" style="left:567.9px;top:364.9px;width:24.2px;height:25.9px;background:#040404;border-radius:2.6px"></div>
<svg style="left:567.9px;top:364.9px" width="24.2" height="25.9" viewBox="0 0 24.2 25.9">
<path d="M8.7 18.2 L8.7 15.4 L6.2 15.4 L12.3 6.6 L18.4 15.4 L15.9 15.4 L15.9 18.2" fill="none" stroke="#fff" stroke-width="1.35" stroke-linejoin="miter"/>
<rect x="6.6" y="18.2" width="11.4" height="2.7" rx="0.8" fill="none" stroke="#fff" stroke-width="1.15"/>
<path d="M10.6 17.3 L12.3 11.8 L14 17.3 M11.2 15.5 L13.4 15.5" fill="none" stroke="#fff" stroke-width="1.1"/>
</svg>
<div class="a" style="left:85px;top:413.2px;width:503px;height:1px;background:#e6edf8"></div>
<div class="a" style="left:2.6px;top:414.2px;width:597.4px;height:8.5px;background:linear-gradient(180deg,#dde7f4,#cbd9ec 35%,#becee6 80%,#b6c7e0);overflow:hidden">
<span class='t' style="left:0.9px;top:1.5px;font:6.8px/8px 'Liberation Sans',sans-serif;color:#1a1e2c;-webkit-text-stroke:0.15px #1a1e2c;transform:scaleX(.82);transform-origin:0 0">Ready</span>
<span class='t' style="left:556.4px;top:1.9px;font:bold 6.2px/8px 'Liberation Sans',sans-serif;color:#4c5a7a;transform:scaleX(.8);transform-origin:0 0">CAP</span>
</div>
<div class="a" style="left:0;top:414px;width:2.6px;height:8.7px;background:#0b1428"></div>
</body></html>
